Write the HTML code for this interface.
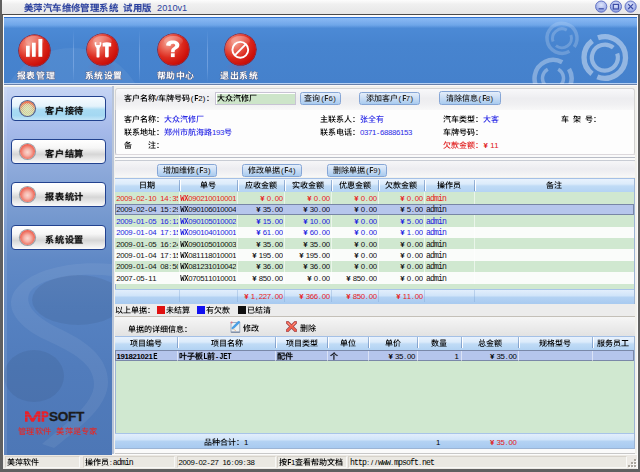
<!DOCTYPE html>
<html><head><meta charset="utf-8"><title>美萍汽车维修管理系统</title>
<style>
*{margin:0;padding:0;box-sizing:border-box}
html,body{width:640px;height:472px;overflow:hidden;background:#606060;font-family:"Liberation Sans",sans-serif}
.a{position:absolute}
.t{position:absolute;font-size:8px;line-height:10px;white-space:nowrap;color:#000}
.m{font-family:"Liberation Sans",sans-serif;font-size:7.8px;letter-spacing:0}
.m i{font-style:normal;display:inline-block;width:4px;text-align:center}
.m i.wd{transform:scaleX(.72)}
.m i.lt{font-family:"Liberation Mono",monospace;font-size:8.2px}
.m i.up{font-weight:bold;font-size:8.4px;transform:scaleX(.85)}
.m i.yn{width:7px;font-weight:bold;text-align:left;padding-left:0.4px}
svg.g{width:1em;height:1em;vertical-align:-0.12em;fill:currentColor;overflow:visible}
.b svg.g path{stroke:currentColor;stroke-width:0.5}
/* toolbar icons */
.ico{position:absolute;width:31px;height:31px;border-radius:50%;
 background:radial-gradient(circle at 32% 30%,#f4a292 0,#ea6454 24%,#dc2a1e 48%,#cc100a 72%,#a40202 100%);
 box-shadow:0 0 0 0.6px #a40000}
.ico:after{content:"";position:absolute;left:6px;top:1.5px;width:19px;height:10px;border-radius:50%;background:linear-gradient(rgba(255,255,255,.3),rgba(255,255,255,0))}
.refl{position:absolute;width:30px;height:10px;border-radius:50%;background:radial-gradient(ellipse at 50% 35%,rgba(130,90,150,.38),rgba(110,110,170,.16) 50%,rgba(100,120,190,0) 72%)}
.lbl{position:absolute;font-size:8.9px;line-height:10px;font-weight:bold;color:#fff;white-space:nowrap;letter-spacing:0.7px;margin-left:-1px}
.lbl svg.g{filter:drop-shadow(0 0 0.6px rgba(10,25,80,1)) drop-shadow(0.4px 0.5px 0.2px rgba(10,25,80,.8))}
.lbl svg.g path{stroke:#fff;stroke-width:1.7}
.sep{position:absolute;top:30px;width:1px;height:52px;background:linear-gradient(rgba(140,180,230,0),rgba(140,180,235,.55) 40%,rgba(140,180,235,.55) 70%,rgba(140,180,230,0))}
/* nav buttons */
.nb{position:absolute;left:11px;width:95px;height:25px;border:1.7px solid #22428f;border-radius:4px;
 background:linear-gradient(#ffffff,#f6f6f6 35%,#d6d6d6 62%,#ececec 85%,#fafafa)}
.nb.on{background:linear-gradient(#f6fbff,#e4f2fb 40%,#a9dbf3 55%,#a4d8f2 80%,#c4e6f8)}
.nb .bl{position:absolute;left:8.2px;top:3.8px;width:15px;height:15px;border-radius:50%;
 background:radial-gradient(circle at 50% 55%,#fad8d0 0,#f6b4aa 30%,#f07868 58%,#ec4a3c 78%,#e84438 100%);box-shadow:0 0 0 1.1px #98a0a8}
.nb .tx{position:absolute;left:33px;top:8.8px;letter-spacing:0.7px;font-size:9.1px;line-height:10px;font-weight:bold;color:#111;white-space:nowrap}
.nb .tx svg.g path{stroke:#111;stroke-width:1.3}
/* buttons */
.btn{position:absolute;height:13.5px;border:1px solid #86a6d6;border-radius:2.5px;background:linear-gradient(#e4eefa,#c8dcf4 50%,#a8cbef);}
.btn .tx{position:absolute;left:0;right:0;top:1.5px;text-align:center;font-size:8px;line-height:10px;white-space:nowrap;color:#222}
/* grid */
.hdr{position:absolute;background:linear-gradient(#a4c0e6 0,#a4c0e6 1px,#e8f2fd 1px,#dcebfb 6px,#c0dbf6 8px,#b2d2f3 100%)}
.hs{position:absolute;top:2px;width:1px;height:11px;background:linear-gradient(#9cb8dc,#7c9cc8);box-shadow:1px 0 0 #fff}
.row{position:absolute;height:11.4px}
.c{position:absolute;top:1.4px;font-size:8px;line-height:9px;white-space:nowrap}
.r{text-align:right}
.sb svg.g path{stroke:currentColor;stroke-width:1.4}
.sb .m i{font-weight:bold}
</style></head><body>

<!-- ===== title bar ===== -->
<div class="a" style="left:2px;top:0;width:638px;height:14px;background:linear-gradient(#fdfdfd,#f0f0f0 30%,#e6e6e6)"></div>
<div class="a" style="left:2px;top:14px;width:636px;height:1px;background:#4a4a4a"></div>
<div class="t b" style="left:24px;top:3px;font-size:9.4px;line-height:10px;font-weight:bold;color:#2c42a0">美萍汽车维修管理系统<span style="display:inline-block;width:5.5px"></span>试用版<span style="display:inline-block;width:5.5px"></span><span style="font-size:9.2px;font-weight:normal">2010v1</span></div>
<svg class="a" style="left:592px;top:0" width="48" height="14" viewBox="0 0 48 14">
 <defs><radialGradient id="wb" cx="50%" cy="35%" r="60%"><stop offset="0" stop-color="#dfe6fb"/><stop offset="0.6" stop-color="#b4c0ee"/><stop offset="1" stop-color="#8a9ce0"/></radialGradient></defs>
 <g stroke="#6272c4" stroke-width="1" fill="url(#wb)"><circle cx="9.2" cy="6.6" r="5.6"/><circle cx="23.9" cy="6.6" r="5.6"/><circle cx="38.6" cy="6.6" r="5.6"/></g>
 <g stroke="#3b4ca6" stroke-width="1.2" fill="none"><path d="M6.6 8.8h5.2"/><rect x="21.3" y="4.4" width="5.2" height="4.6"/><path d="M36.2 4.2l4.8 4.8M41 4.2l-4.8 4.8"/></g>
</svg>

<!-- ===== inner frame ===== -->
<div class="a" style="left:3px;top:15px;width:635px;height:453.6px;background:#fbfbfb"></div>

<!-- ===== toolbar ===== -->
<div class="a" style="left:4px;top:16.5px;width:633px;height:68.5px;overflow:hidden;background:linear-gradient(#2f72d0 0,#2f72d0 1px,#7eb0f0 1px,#70a6ea 5px,#66a0e6 8px,#4c8ad6 10.5px,#4784cf 40%,#4581cc 96%,#4581cc 66.5px,#b6d0f2 66.5px,#b6d0f2 67.5px,#6a82aa 67.5px)">
 <svg class="a" style="left:0;top:-0.5px" width="633" height="68" viewBox="4 16 633 68">
  <circle cx="72" cy="122" r="74" fill="#fff" opacity="0.06"/>
  <g fill="none" stroke="#fff"><path d="M592.3 40.9A20.8 20.8 0 0 0 592.0 73.9M597.3 76.9A20.8 20.8 0 1 0 598.0 37.8" stroke-width="5.3" opacity="0.42"/><path d="M613.3 47.7A13 13 0 1 0 617.2 53.5" stroke-width="4.2" opacity="0.42"/><path d="M574.3 46.9A15 15 0 1 0 569.5 51.3" stroke-width="3.5" opacity="0.2"/><path d="M566.8 30.1A9.5 9.5 0 0 0 553.1 41.5M555.9 45.6A9.5 9.5 0 0 0 570.9 35.1" stroke-width="3" opacity="0.2"/><path d="M562.2 62.3A18.5 18.5 0 1 0 569.0 69.0" stroke-width="4.5" opacity="0.33"/><path d="M547.8 69.2A10.5 10.5 0 1 0 558.2 69.2" stroke-width="3.5" opacity="0.33"/></g>
 </svg>
 <div class="a" style="left:0;top:1px;width:633px;height:10px;background:linear-gradient(rgba(150,195,245,.45),rgba(120,170,235,.15))"></div>
</div>
<div class="sep" style="left:72.5px"></div>
<div class="sep" style="left:139px"></div>
<div class="sep" style="left:206.5px"></div>

<div class="refl" style="left:20px;top:63px"></div>
<div class="refl" style="left:87px;top:63px"></div>
<div class="refl" style="left:158.5px;top:63px"></div>
<div class="refl" style="left:225.3px;top:63px"></div>
<div class="ico" style="left:19.4px;top:34.5px"></div>
<div class="ico" style="left:86.7px;top:34.2px"></div>
<div class="ico" style="left:158px;top:34.2px"></div>
<div class="ico" style="left:224.8px;top:34.3px"></div>
<svg class="a" style="left:0;top:16px" width="280" height="68" viewBox="0 16 280 68">
 <g fill="#fff">
  <rect x="26" y="45.7" width="3.7" height="11.1"/><rect x="32" y="42.7" width="3.7" height="14.1"/><rect x="38.4" y="39" width="3.9" height="17.8"/>
  <path d="M94.6 42.6C94.6 45.6 95.6 47.2 96.5 47.9V56.4C96.5 57.2 97.1 57.6 98 57.6C98.9 57.6 99.5 57.2 99.5 56.4V47.9C100.4 47.2 101.4 45.6 101.4 42.6L99.7 42.1V44.9H96.3V42.1Z"/>
  <path d="M102.6 43Q106.9 41.7 111.2 43V46.4H108.7V56.5Q108.7 57.6 106.9 57.6Q105.1 57.6 105.1 56.5V46.4H102.6Z"/>
  <path d="M166.2 45.4c0-3.4 2.6-5 6.6-5 4 0 6.6 1.8 6.6 4.6 0 2.4-1.6 3.4-3.2 4.3-1.2.7-1.5 1.2-1.5 2.3v.6h-3.6v-1c0-1.8.6-2.8 2.2-3.8 1.3-.8 1.9-1.2 1.9-2.1 0-.9-.8-1.6-2.2-1.6-1.5 0-2.4.8-2.5 2.3z"/>
  <rect x="170.9" y="53.3" width="3.8" height="3.8"/>
 </g>
 <g fill="none" stroke="#fff" stroke-width="1.9"><circle cx="240.3" cy="49.8" r="7.9"/><path d="M245.6 44.4l-10.6 10.8"/></g>
</svg>
<div class="lbl" style="left:17.8px;top:71px">报表管理</div>
<div class="lbl" style="left:85.6px;top:71px">系统设置</div>
<div class="lbl" style="left:157.5px;top:71px">帮助中心</div>
<div class="lbl" style="left:221px;top:71px">退出系统</div>

<!-- ===== left panel ===== -->
<div class="a" style="left:4px;top:86px;width:108px;height:369px;overflow:hidden;background:linear-gradient(#ecefe8 0,#ecefe8 1px,#c6d5f4 1px,#c0d0f2 10px,#a6baea 44px,#8ba8d9 87px,#7699cf 130px,#6089c6 173px,#5682c2 220px,#517cbc 280px,#4d77b6 369px)">
 <svg class="a" style="left:0;top:0" width="108" height="369" viewBox="4 86 108 369">
  <g fill="#000" opacity="0.06">
   <ellipse cx="78" cy="300" rx="46" ry="25"/>
   <ellipse cx="34" cy="376" rx="30" ry="26"/>
  </g>
  <g fill="#ffffff" opacity="0.065">
   <path d="M112 264 C70 260 28 270 14 292 C4 310 20 328 46 340 C74 353 94 364 94 384 C94 404 68 422 42 444 L54 448 C82 426 108 406 108 382 C108 356 84 340 58 328 C34 316 24 304 30 292 C40 278 78 272 112 276 Z"/>
  </g>
  <rect x="4" y="86" width="3" height="369" fill="#fff" opacity="0.10"/>
 </svg>
</div>
<div class="a" style="left:112px;top:86px;width:1.5px;height:368px;background:#b8c4d8"></div>

<div class="nb on" style="top:96.2px"><div class="bl" style="background:radial-gradient(circle at 50% 55%,rgba(214,240,196,.85) 0,rgba(214,240,196,.55) 40%,rgba(214,240,196,0) 62%),repeating-conic-gradient(#f07452 0 25%,#d0eebc 0 50%) 0 0/2px 2px,#e89070;box-shadow:0 0 0 1.1px #56648e,inset 0 -2px 2px rgba(210,240,190,.8),inset 0 2px 1px rgba(240,110,80,.9)"></div><div class="tx">客户接待</div></div>
<div class="nb" style="top:139.4px"><div class="bl"></div><div class="tx">客户结算</div></div>
<div class="nb" style="top:181.8px"><div class="bl"></div><div class="tx">报表统计</div></div>
<div class="nb" style="top:225px"><div class="bl"></div><div class="tx">系统设置</div></div>

<!-- logo -->
<svg class="a" style="left:20px;top:408px" width="30" height="16" viewBox="20 408 30 16">
 <path fill="#e8202a" d="M25 421.8V411.3H28.2L32.6 418.2L37 411.3H40.4V421.8H37.8V415.6L33.8 421.8H31.4L27.6 415.6V421.8Z M41.6 421.8V411.3H45.6C49.6 411.3 49.6 417.6 45.6 417.6H44.2V421.8Z M44.2 413.3V415.6H45.4C46.9 415.6 46.9 413.3 45.4 413.3Z" fill-rule="evenodd"/>
 <g fill="#4d78bf" opacity="0.55"><rect x="24" y="414.2" width="26" height="0.6"/><rect x="24" y="417.4" width="26" height="0.6"/></g>
</svg>
<div class="a" style="left:49px;top:410.3px;font-size:13.6px;line-height:14px;font-weight:bold;white-space:nowrap;letter-spacing:-0.3px;color:#1c1c1c;-webkit-text-stroke:0.3px #1c1c1c">SOFT</div>
<div class="t" style="left:18.3px;top:426.5px;font-size:8.2px;color:#e02a2a">管理软件<span style="display:inline-block;width:5.4px"></span>美萍是专家</div>
<!-- ===== content ===== -->
<div class="a" style="left:113.5px;top:86px;width:523.5px;height:368px;background:#f2f1ec"></div>
<!-- search panel -->
<div class="a" style="left:114.5px;top:87.5px;width:520px;height:22px;border-radius:3px 3px 0 0;border:1px solid #d4d4d4;border-bottom:none;background:linear-gradient(#f8f8fa,#ededf0 45%,#f0f0f2 72%,#f8f8f8)"></div>
<div class="t" style="left:123.9px;top:93.7px">客户名称/车牌号码<span class="m">(F2)</span>：</div>
<div class="a" style="left:215.2px;top:91.5px;width:80.4px;height:13px;border:1px solid #c8c4d4;background:#cde5c9;box-shadow:inset 1px 1px 0 #fff"></div>
<div class="t" style="left:216.8px;top:93.5px">大众汽修厂</div>
<div class="btn" style="left:300.3px;top:91.7px;width:40.3px"><div class="tx">查询<span class="m">(F6)</span></div></div>
<div class="btn" style="left:359.4px;top:91.6px;width:60.6px"><div class="tx">添加客户<span class="m">(F7)</span></div></div>
<div class="btn" style="left:439px;top:91.2px;width:61.6px"><div class="tx">清除信息<span class="m">(F8)</span></div></div>

<!-- info panel -->
<div class="a" style="left:114.5px;top:109.5px;width:520px;height:45px;border-left:1px solid #b8bcc8;border-right:1px solid #d0d0d0;border-radius:0 0 3px 3px;background:#fdfdfd"></div>
<div class="t" style="left:124.1px;top:115px">客户名称：<span style="color:#2a2ae6">大众汽修厂</span></div>
<div class="t" style="left:124.1px;top:128px">联系地址：<span style="color:#2a2ae6">郑州市航海路<span class="m">193</span>号</span></div>
<div class="t" style="left:124.1px;top:140.6px">备<span style="display:inline-block;width:16px"></span>注：</div>
<div class="t" style="left:320px;top:115px">主联系人：<span style="color:#2a2ae6">张全有</span></div>
<div class="t" style="left:320px;top:128px">联系电话：<span class="m" style="color:#2a2ae6">0371-68886153</span></div>
<div class="t" style="left:443.2px;top:115px">汽车类型：<span style="color:#2a2ae6">大客</span></div>
<div class="t" style="left:443.2px;top:128px">车牌号码：</div>
<div class="t" style="left:443.2px;top:140.6px;color:#e01818">欠款金额：<span class="m">￥11</span></div>
<div class="t" style="left:561px;top:115px">车<span style="display:inline-block;width:4px"></span>架<span style="display:inline-block;width:4px"></span>号：</div>

<!-- separator -->
<div class="a" style="left:114.5px;top:154px;width:520px;height:1px;background:#dcd8dc"></div>
<div class="a" style="left:114.5px;top:155px;width:520px;height:2px;background:#fafafa"></div>
<div class="a" style="left:114.5px;top:157px;width:520px;height:1px;background:#b8bcc6"></div>
<div class="a" style="left:114.5px;top:158px;width:520px;height:1.8px;background:#fbfbfb"></div>
<div class="a" style="left:114.5px;top:159.8px;width:520px;height:1px;background:#c8ccd4"></div>
<!-- button bar -->
<div class="a" style="left:114.5px;top:160.8px;width:520px;height:16.7px;border-radius:3px 3px 0 0;background:linear-gradient(#f6f6f8,#ececf0 50%,#f2f2f4 80%,#f8f8f8)"></div>
<div class="btn" style="left:157px;top:163.5px;width:60.4px"><div class="tx">增加维修<span class="m">(F3)</span></div></div>
<div class="btn" style="left:242px;top:163.5px;width:60.4px"><div class="tx">修改单据<span class="m">(F4)</span></div></div>
<div class="btn" style="left:327px;top:163.5px;width:60.4px"><div class="tx">删除单据<span class="m">(F9)</span></div></div>

<!-- ===== main grid ===== -->
<div class="a" style="left:114.5px;top:177.5px;width:520px;height:126px;border:1px solid #9cb4d4;border-top:none;background:#d0e8d0"></div>
<div class="hdr" style="left:115px;top:177.5px;width:519px;height:15px"></div>
<div class="t " style="left:116.5px;top:181.3px;width:61.0px;overflow:hidden;text-align:center;">日期</div>
<div class="t " style="left:180.5px;top:181.3px;width:55.0px;overflow:hidden;text-align:center;">单号</div>
<div class="hs" style="left:178.5px;top:179.5px"></div>
<div class="t " style="left:238.5px;top:181.3px;width:44.0px;overflow:hidden;text-align:center;">应收金额</div>
<div class="hs" style="left:236.5px;top:179.5px"></div>
<div class="t " style="left:285.5px;top:181.3px;width:44.0px;overflow:hidden;text-align:center;">实收金额</div>
<div class="hs" style="left:283.5px;top:179.5px"></div>
<div class="t " style="left:332.5px;top:181.3px;width:44.0px;overflow:hidden;text-align:center;">优惠金额</div>
<div class="hs" style="left:330.5px;top:179.5px"></div>
<div class="t " style="left:379.5px;top:181.3px;width:43.0px;overflow:hidden;text-align:center;">欠款金额</div>
<div class="hs" style="left:377.5px;top:179.5px"></div>
<div class="t " style="left:425.5px;top:181.3px;width:47.3px;overflow:hidden;text-align:center;">操作员</div>
<div class="hs" style="left:423.5px;top:179.5px"></div>
<div class="t " style="left:475.8px;top:181.3px;width:156.7px;overflow:hidden;text-align:center;">备注</div>
<div class="hs" style="left:473.8px;top:179.5px"></div>
<div class="row" style="left:115px;top:192.4px;width:519px;background:#d0e8d0"></div>
<div class="a" style="left:178.5px;top:192.4px;width:1px;height:11.4px;background:rgba(255,255,255,.55)"></div>
<div class="a" style="left:236.5px;top:192.4px;width:1px;height:11.4px;background:rgba(255,255,255,.55)"></div>
<div class="a" style="left:283.5px;top:192.4px;width:1px;height:11.4px;background:rgba(255,255,255,.55)"></div>
<div class="a" style="left:330.5px;top:192.4px;width:1px;height:11.4px;background:rgba(255,255,255,.55)"></div>
<div class="a" style="left:377.5px;top:192.4px;width:1px;height:11.4px;background:rgba(255,255,255,.55)"></div>
<div class="a" style="left:423.5px;top:192.4px;width:1px;height:11.4px;background:rgba(255,255,255,.55)"></div>
<div class="a" style="left:473.8px;top:192.4px;width:1px;height:11.4px;background:rgba(255,255,255,.55)"></div>
<div class="t " style="left:116.3px;top:194.0px;width:61.4px;overflow:hidden;color:#e81c1c;"><span class="m">2009-02-10 14:35:21</span></div>
<div class="t " style="left:180.3px;top:194.0px;width:55.4px;overflow:hidden;color:#e81c1c;"><span class="m">WX090210010001</span></div>
<div class="t " style="left:238.2px;top:194.0px;width:44.6px;overflow:hidden;text-align:right;color:#e81c1c;"><span class="m">￥0.00</span></div>
<div class="t " style="left:285.2px;top:194.0px;width:44.6px;overflow:hidden;text-align:right;color:#e81c1c;"><span class="m">￥0.00</span></div>
<div class="t " style="left:332.2px;top:194.0px;width:44.6px;overflow:hidden;text-align:right;color:#e81c1c;"><span class="m">￥0.00</span></div>
<div class="t " style="left:379.2px;top:194.0px;width:43.6px;overflow:hidden;text-align:right;color:#e81c1c;"><span class="m">￥0.00</span></div>
<div class="t " style="left:426.0px;top:194.0px;width:46.3px;overflow:hidden;color:#e81c1c;"><span class="m">admin</span></div>
<div class="row" style="left:115px;top:203.8px;width:519px;background:#b6c6ec;border:1px solid #7886a6"></div>
<div class="t " style="left:116.3px;top:205.4px;width:61.4px;overflow:hidden;color:#101020;"><span class="m">2009-02-04 15:29:10</span></div>
<div class="t " style="left:180.3px;top:205.4px;width:55.4px;overflow:hidden;color:#101020;"><span class="m">WX090106010004</span></div>
<div class="t " style="left:238.2px;top:205.4px;width:44.6px;overflow:hidden;text-align:right;color:#101020;"><span class="m">￥35.00</span></div>
<div class="t " style="left:285.2px;top:205.4px;width:44.6px;overflow:hidden;text-align:right;color:#101020;"><span class="m">￥30.00</span></div>
<div class="t " style="left:332.2px;top:205.4px;width:44.6px;overflow:hidden;text-align:right;color:#101020;"><span class="m">￥0.00</span></div>
<div class="t " style="left:379.2px;top:205.4px;width:43.6px;overflow:hidden;text-align:right;color:#101020;"><span class="m">￥5.00</span></div>
<div class="t " style="left:426.0px;top:205.4px;width:46.3px;overflow:hidden;color:#101020;"><span class="m">admin</span></div>
<div class="row" style="left:115px;top:215.2px;width:519px;background:#d0e8d0"></div>
<div class="a" style="left:178.5px;top:215.2px;width:1px;height:11.4px;background:rgba(255,255,255,.55)"></div>
<div class="a" style="left:236.5px;top:215.2px;width:1px;height:11.4px;background:rgba(255,255,255,.55)"></div>
<div class="a" style="left:283.5px;top:215.2px;width:1px;height:11.4px;background:rgba(255,255,255,.55)"></div>
<div class="a" style="left:330.5px;top:215.2px;width:1px;height:11.4px;background:rgba(255,255,255,.55)"></div>
<div class="a" style="left:377.5px;top:215.2px;width:1px;height:11.4px;background:rgba(255,255,255,.55)"></div>
<div class="a" style="left:423.5px;top:215.2px;width:1px;height:11.4px;background:rgba(255,255,255,.55)"></div>
<div class="a" style="left:473.8px;top:215.2px;width:1px;height:11.4px;background:rgba(255,255,255,.55)"></div>
<div class="t " style="left:116.3px;top:216.8px;width:61.4px;overflow:hidden;color:#1c1ce0;"><span class="m">2009-01-05 16:12:40</span></div>
<div class="t " style="left:180.3px;top:216.8px;width:55.4px;overflow:hidden;color:#1c1ce0;"><span class="m">WX090105010002</span></div>
<div class="t " style="left:238.2px;top:216.8px;width:44.6px;overflow:hidden;text-align:right;color:#1c1ce0;"><span class="m">￥15.00</span></div>
<div class="t " style="left:285.2px;top:216.8px;width:44.6px;overflow:hidden;text-align:right;color:#1c1ce0;"><span class="m">￥10.00</span></div>
<div class="t " style="left:332.2px;top:216.8px;width:44.6px;overflow:hidden;text-align:right;color:#1c1ce0;"><span class="m">￥0.00</span></div>
<div class="t " style="left:379.2px;top:216.8px;width:43.6px;overflow:hidden;text-align:right;color:#1c1ce0;"><span class="m">￥5.00</span></div>
<div class="t " style="left:426.0px;top:216.8px;width:46.3px;overflow:hidden;color:#1c1ce0;"><span class="m">admin</span></div>
<div class="row" style="left:115px;top:226.6px;width:519px;background:#fafcfa"></div>
<div class="a" style="left:178.5px;top:226.6px;width:1px;height:11.4px;background:rgba(255,255,255,.55)"></div>
<div class="a" style="left:236.5px;top:226.6px;width:1px;height:11.4px;background:rgba(255,255,255,.55)"></div>
<div class="a" style="left:283.5px;top:226.6px;width:1px;height:11.4px;background:rgba(255,255,255,.55)"></div>
<div class="a" style="left:330.5px;top:226.6px;width:1px;height:11.4px;background:rgba(255,255,255,.55)"></div>
<div class="a" style="left:377.5px;top:226.6px;width:1px;height:11.4px;background:rgba(255,255,255,.55)"></div>
<div class="a" style="left:423.5px;top:226.6px;width:1px;height:11.4px;background:rgba(255,255,255,.55)"></div>
<div class="a" style="left:473.8px;top:226.6px;width:1px;height:11.4px;background:rgba(255,255,255,.55)"></div>
<div class="t " style="left:116.3px;top:228.2px;width:61.4px;overflow:hidden;color:#1c1ce0;"><span class="m">2009-01-04 17:15:02</span></div>
<div class="t " style="left:180.3px;top:228.2px;width:55.4px;overflow:hidden;color:#1c1ce0;"><span class="m">WX090104010001</span></div>
<div class="t " style="left:238.2px;top:228.2px;width:44.6px;overflow:hidden;text-align:right;color:#1c1ce0;"><span class="m">￥61.00</span></div>
<div class="t " style="left:285.2px;top:228.2px;width:44.6px;overflow:hidden;text-align:right;color:#1c1ce0;"><span class="m">￥60.00</span></div>
<div class="t " style="left:332.2px;top:228.2px;width:44.6px;overflow:hidden;text-align:right;color:#1c1ce0;"><span class="m">￥0.00</span></div>
<div class="t " style="left:379.2px;top:228.2px;width:43.6px;overflow:hidden;text-align:right;color:#1c1ce0;"><span class="m">￥1.00</span></div>
<div class="t " style="left:426.0px;top:228.2px;width:46.3px;overflow:hidden;color:#1c1ce0;"><span class="m">admin</span></div>
<div class="row" style="left:115px;top:238.0px;width:519px;background:#d0e8d0"></div>
<div class="a" style="left:178.5px;top:238.0px;width:1px;height:11.4px;background:rgba(255,255,255,.55)"></div>
<div class="a" style="left:236.5px;top:238.0px;width:1px;height:11.4px;background:rgba(255,255,255,.55)"></div>
<div class="a" style="left:283.5px;top:238.0px;width:1px;height:11.4px;background:rgba(255,255,255,.55)"></div>
<div class="a" style="left:330.5px;top:238.0px;width:1px;height:11.4px;background:rgba(255,255,255,.55)"></div>
<div class="a" style="left:377.5px;top:238.0px;width:1px;height:11.4px;background:rgba(255,255,255,.55)"></div>
<div class="a" style="left:423.5px;top:238.0px;width:1px;height:11.4px;background:rgba(255,255,255,.55)"></div>
<div class="a" style="left:473.8px;top:238.0px;width:1px;height:11.4px;background:rgba(255,255,255,.55)"></div>
<div class="t " style="left:116.3px;top:239.6px;width:61.4px;overflow:hidden;color:#101010;"><span class="m">2009-01-05 16:24:33</span></div>
<div class="t " style="left:180.3px;top:239.6px;width:55.4px;overflow:hidden;color:#101010;"><span class="m">WX090105010003</span></div>
<div class="t " style="left:238.2px;top:239.6px;width:44.6px;overflow:hidden;text-align:right;color:#101010;"><span class="m">￥35.00</span></div>
<div class="t " style="left:285.2px;top:239.6px;width:44.6px;overflow:hidden;text-align:right;color:#101010;"><span class="m">￥35.00</span></div>
<div class="t " style="left:332.2px;top:239.6px;width:44.6px;overflow:hidden;text-align:right;color:#101010;"><span class="m">￥0.00</span></div>
<div class="t " style="left:379.2px;top:239.6px;width:43.6px;overflow:hidden;text-align:right;color:#101010;"><span class="m">￥0.00</span></div>
<div class="t " style="left:426.0px;top:239.6px;width:46.3px;overflow:hidden;color:#101010;"><span class="m">admin</span></div>
<div class="row" style="left:115px;top:249.4px;width:519px;background:#fafcfa"></div>
<div class="a" style="left:178.5px;top:249.4px;width:1px;height:11.4px;background:rgba(255,255,255,.55)"></div>
<div class="a" style="left:236.5px;top:249.4px;width:1px;height:11.4px;background:rgba(255,255,255,.55)"></div>
<div class="a" style="left:283.5px;top:249.4px;width:1px;height:11.4px;background:rgba(255,255,255,.55)"></div>
<div class="a" style="left:330.5px;top:249.4px;width:1px;height:11.4px;background:rgba(255,255,255,.55)"></div>
<div class="a" style="left:377.5px;top:249.4px;width:1px;height:11.4px;background:rgba(255,255,255,.55)"></div>
<div class="a" style="left:423.5px;top:249.4px;width:1px;height:11.4px;background:rgba(255,255,255,.55)"></div>
<div class="a" style="left:473.8px;top:249.4px;width:1px;height:11.4px;background:rgba(255,255,255,.55)"></div>
<div class="t " style="left:116.3px;top:251.0px;width:61.4px;overflow:hidden;color:#101010;"><span class="m">2009-01-04 17:15:50</span></div>
<div class="t " style="left:180.3px;top:251.0px;width:55.4px;overflow:hidden;color:#101010;"><span class="m">WX081118010001</span></div>
<div class="t " style="left:238.2px;top:251.0px;width:44.6px;overflow:hidden;text-align:right;color:#101010;"><span class="m">￥195.00</span></div>
<div class="t " style="left:285.2px;top:251.0px;width:44.6px;overflow:hidden;text-align:right;color:#101010;"><span class="m">￥195.00</span></div>
<div class="t " style="left:332.2px;top:251.0px;width:44.6px;overflow:hidden;text-align:right;color:#101010;"><span class="m">￥0.00</span></div>
<div class="t " style="left:379.2px;top:251.0px;width:43.6px;overflow:hidden;text-align:right;color:#101010;"><span class="m">￥0.00</span></div>
<div class="t " style="left:426.0px;top:251.0px;width:46.3px;overflow:hidden;color:#101010;"><span class="m">admin</span></div>
<div class="row" style="left:115px;top:260.8px;width:519px;background:#d0e8d0"></div>
<div class="a" style="left:178.5px;top:260.8px;width:1px;height:11.4px;background:rgba(255,255,255,.55)"></div>
<div class="a" style="left:236.5px;top:260.8px;width:1px;height:11.4px;background:rgba(255,255,255,.55)"></div>
<div class="a" style="left:283.5px;top:260.8px;width:1px;height:11.4px;background:rgba(255,255,255,.55)"></div>
<div class="a" style="left:330.5px;top:260.8px;width:1px;height:11.4px;background:rgba(255,255,255,.55)"></div>
<div class="a" style="left:377.5px;top:260.8px;width:1px;height:11.4px;background:rgba(255,255,255,.55)"></div>
<div class="a" style="left:423.5px;top:260.8px;width:1px;height:11.4px;background:rgba(255,255,255,.55)"></div>
<div class="a" style="left:473.8px;top:260.8px;width:1px;height:11.4px;background:rgba(255,255,255,.55)"></div>
<div class="t " style="left:116.3px;top:262.4px;width:61.4px;overflow:hidden;color:#101010;"><span class="m">2009-01-04 08:50:11</span></div>
<div class="t " style="left:180.3px;top:262.4px;width:55.4px;overflow:hidden;color:#101010;"><span class="m">WX081231010042</span></div>
<div class="t " style="left:238.2px;top:262.4px;width:44.6px;overflow:hidden;text-align:right;color:#101010;"><span class="m">￥36.00</span></div>
<div class="t " style="left:285.2px;top:262.4px;width:44.6px;overflow:hidden;text-align:right;color:#101010;"><span class="m">￥36.00</span></div>
<div class="t " style="left:332.2px;top:262.4px;width:44.6px;overflow:hidden;text-align:right;color:#101010;"><span class="m">￥0.00</span></div>
<div class="t " style="left:379.2px;top:262.4px;width:43.6px;overflow:hidden;text-align:right;color:#101010;"><span class="m">￥0.00</span></div>
<div class="t " style="left:426.0px;top:262.4px;width:46.3px;overflow:hidden;color:#101010;"><span class="m">admin</span></div>
<div class="row" style="left:115px;top:272.2px;width:519px;background:#fafcfa"></div>
<div class="a" style="left:178.5px;top:272.2px;width:1px;height:11.4px;background:rgba(255,255,255,.55)"></div>
<div class="a" style="left:236.5px;top:272.2px;width:1px;height:11.4px;background:rgba(255,255,255,.55)"></div>
<div class="a" style="left:283.5px;top:272.2px;width:1px;height:11.4px;background:rgba(255,255,255,.55)"></div>
<div class="a" style="left:330.5px;top:272.2px;width:1px;height:11.4px;background:rgba(255,255,255,.55)"></div>
<div class="a" style="left:377.5px;top:272.2px;width:1px;height:11.4px;background:rgba(255,255,255,.55)"></div>
<div class="a" style="left:423.5px;top:272.2px;width:1px;height:11.4px;background:rgba(255,255,255,.55)"></div>
<div class="a" style="left:473.8px;top:272.2px;width:1px;height:11.4px;background:rgba(255,255,255,.55)"></div>
<div class="t " style="left:116.3px;top:273.8px;width:61.4px;overflow:hidden;color:#101010;"><span class="m">2007-05-11</span></div>
<div class="t " style="left:180.3px;top:273.8px;width:55.4px;overflow:hidden;color:#101010;"><span class="m">WX070511010001</span></div>
<div class="t " style="left:238.2px;top:273.8px;width:44.6px;overflow:hidden;text-align:right;color:#101010;"><span class="m">￥850.00</span></div>
<div class="t " style="left:285.2px;top:273.8px;width:44.6px;overflow:hidden;text-align:right;color:#101010;"><span class="m">￥0.00</span></div>
<div class="t " style="left:332.2px;top:273.8px;width:44.6px;overflow:hidden;text-align:right;color:#101010;"><span class="m">￥850.00</span></div>
<div class="t " style="left:379.2px;top:273.8px;width:43.6px;overflow:hidden;text-align:right;color:#101010;"><span class="m">￥0.00</span></div>
<div class="t " style="left:426.0px;top:273.8px;width:46.3px;overflow:hidden;color:#101010;"><span class="m">admin</span></div>
<div class="a" style="left:115px;top:289px;width:519px;height:14.5px;background:linear-gradient(#a8c4e8 0,#a8c4e8 1px,#e2eefc 1px,#d0e4f9 45%,#b4d2f3 55%,#a8caf0 100%)"></div>
<div class="t " style="left:238.2px;top:292.4px;width:44.6px;overflow:hidden;text-align:right;color:#e81c1c;"><span class="m">￥1,227.00</span></div>
<div class="t " style="left:285.2px;top:292.4px;width:44.6px;overflow:hidden;text-align:right;color:#e81c1c;"><span class="m">￥366.00</span></div>
<div class="t " style="left:332.2px;top:292.4px;width:44.6px;overflow:hidden;text-align:right;color:#e81c1c;"><span class="m">￥850.00</span></div>
<div class="t " style="left:379.2px;top:292.4px;width:43.6px;overflow:hidden;text-align:right;color:#e81c1c;"><span class="m">￥11.00</span></div>
<div class="a" style="left:178.5px;top:290px;width:1px;height:12px;background:rgba(120,160,210,.35)"></div>
<div class="a" style="left:236.5px;top:290px;width:1px;height:12px;background:rgba(120,160,210,.35)"></div>
<div class="a" style="left:283.5px;top:290px;width:1px;height:12px;background:rgba(120,160,210,.35)"></div>
<div class="a" style="left:330.5px;top:290px;width:1px;height:12px;background:rgba(120,160,210,.35)"></div>
<div class="a" style="left:377.5px;top:290px;width:1px;height:12px;background:rgba(120,160,210,.35)"></div>
<div class="a" style="left:423.5px;top:290px;width:1px;height:12px;background:rgba(120,160,210,.35)"></div>
<div class="a" style="left:473.8px;top:290px;width:1px;height:12px;background:rgba(120,160,210,.35)"></div>

<!-- legend -->
<div class="a" style="left:114.5px;top:303.5px;width:520px;height:12.8px;background:#ececec"></div>
<div class="t" style="left:115px;top:305.5px">以上单据：</div>
<div class="a" style="left:157px;top:305.8px;width:8px;height:8.4px;background:#e01010"></div>
<div class="t" style="left:166.2px;top:305.5px">未结算</div>
<div class="a" style="left:197px;top:305.8px;width:8px;height:8.4px;background:#1010f0"></div>
<div class="t" style="left:206.2px;top:305.5px">有欠款</div>
<div class="a" style="left:237.6px;top:305.8px;width:8px;height:8.4px;background:#101010"></div>
<div class="t" style="left:246.6px;top:305.5px">已结清</div>
<div class="a" style="left:114.5px;top:316.3px;width:520px;height:1px;background:#c4c0b8"></div>
<!-- detail bar -->
<div class="a" style="left:114.5px;top:317.3px;width:520px;height:18.5px;background:linear-gradient(#f6f6f6,#eaeaea 60%,#e2e2e2)"></div>
<div class="t" style="left:127.6px;top:324.8px">单据的详细信息：</div>
<svg class="a" style="left:230px;top:321px" width="11" height="12" viewBox="0 0 11 12"><rect x="1" y="1.5" width="8.8" height="9.6" fill="#eef0f2" stroke="#8c9cb4" stroke-width="0.8"/><path d="M1.2 11.2h8.6" stroke="#6a7c98" stroke-width="1"/><path d="M8.8 1.2L2.8 7.2" stroke="#4c9ee4" stroke-width="2.4" stroke-linecap="round"/><circle cx="1.6" cy="1.6" r="1" fill="#e07080"/><path d="M3 7.8l3 2" stroke="#e8c8a0" stroke-width="1"/></svg>
<div class="t" style="left:242.6px;top:323.5px">修改</div>
<svg class="a" style="left:286px;top:321px" width="11" height="11" viewBox="0 0 11 11"><g stroke-linecap="round"><path d="M1.5 1.5L9.5 9.5M9.5 1.5L1.5 9.5" stroke="#8a4858" stroke-width="3.2"/><path d="M1.5 1.5L9.5 9.5M9.5 1.5L1.5 9.5" stroke="#f0604c" stroke-width="2.3"/><path d="M2 2L4 4M9 2L7 4" stroke="#ffb0a0" stroke-width="0.8"/></g></svg>
<div class="t" style="left:299.5px;top:323.5px">删除</div>

<!-- ===== detail grid ===== -->
<div class="a" style="left:114.5px;top:335.5px;width:520px;height:113px;border:1px solid #9cb4d4;border-top:none;background:#d0e8d0"></div>
<div class="hdr" style="left:115px;top:335.5px;width:519px;height:14.5px"></div>
<div class="t " style="left:116.5px;top:338.6px;width:59.5px;overflow:hidden;text-align:center;">项目编号</div>
<div class="t " style="left:179.0px;top:338.6px;width:95.1px;overflow:hidden;text-align:center;">项目名称</div>
<div class="hs" style="left:177.0px;top:337.4px"></div>
<div class="t " style="left:277.1px;top:338.6px;width:49.2px;overflow:hidden;text-align:center;">项目类型</div>
<div class="hs" style="left:275.1px;top:337.4px"></div>
<div class="t " style="left:329.3px;top:338.6px;width:37.6px;overflow:hidden;text-align:center;">单位</div>
<div class="hs" style="left:327.3px;top:337.4px"></div>
<div class="t " style="left:369.9px;top:338.6px;width:45.6px;overflow:hidden;text-align:center;">单价</div>
<div class="hs" style="left:367.9px;top:337.4px"></div>
<div class="t " style="left:418.5px;top:338.6px;width:41.3px;overflow:hidden;text-align:center;">数量</div>
<div class="hs" style="left:416.5px;top:337.4px"></div>
<div class="t " style="left:462.8px;top:338.6px;width:54.1px;overflow:hidden;text-align:center;">总金额</div>
<div class="hs" style="left:460.8px;top:337.4px"></div>
<div class="t " style="left:519.9px;top:338.6px;width:70.6px;overflow:hidden;text-align:center;">规格型号</div>
<div class="hs" style="left:517.9px;top:337.4px"></div>
<div class="t " style="left:593.5px;top:338.6px;width:39.0px;overflow:hidden;text-align:center;">服务员工</div>
<div class="hs" style="left:591.5px;top:337.4px"></div>
<div class="row" style="left:115px;top:350px;width:519px;height:11px;background:#b5c5ec;border:1px solid #7a88a8"></div>
<div class="a" style="left:177.0px;top:351px;width:1px;height:9.5px;background:rgba(255,255,255,.5)"></div>
<div class="a" style="left:275.1px;top:351px;width:1px;height:9.5px;background:rgba(255,255,255,.5)"></div>
<div class="a" style="left:327.3px;top:351px;width:1px;height:9.5px;background:rgba(255,255,255,.5)"></div>
<div class="a" style="left:367.9px;top:351px;width:1px;height:9.5px;background:rgba(255,255,255,.5)"></div>
<div class="a" style="left:416.5px;top:351px;width:1px;height:9.5px;background:rgba(255,255,255,.5)"></div>
<div class="a" style="left:460.8px;top:351px;width:1px;height:9.5px;background:rgba(255,255,255,.5)"></div>
<div class="a" style="left:517.9px;top:351px;width:1px;height:9.5px;background:rgba(255,255,255,.5)"></div>
<div class="a" style="left:591.5px;top:351px;width:1px;height:9.5px;background:rgba(255,255,255,.5)"></div>
<div class="a" style="left:177.0px;top:434.5px;width:1px;height:12.5px;background:rgba(120,160,210,.35)"></div>
<div class="a" style="left:275.1px;top:434.5px;width:1px;height:12.5px;background:rgba(120,160,210,.35)"></div>
<div class="a" style="left:327.3px;top:434.5px;width:1px;height:12.5px;background:rgba(120,160,210,.35)"></div>
<div class="a" style="left:367.9px;top:434.5px;width:1px;height:12.5px;background:rgba(120,160,210,.35)"></div>
<div class="a" style="left:416.5px;top:434.5px;width:1px;height:12.5px;background:rgba(120,160,210,.35)"></div>
<div class="a" style="left:460.8px;top:434.5px;width:1px;height:12.5px;background:rgba(120,160,210,.35)"></div>
<div class="a" style="left:517.9px;top:434.5px;width:1px;height:12.5px;background:rgba(120,160,210,.35)"></div>
<div class="a" style="left:591.5px;top:434.5px;width:1px;height:12.5px;background:rgba(120,160,210,.35)"></div>
<div class="t sb" style="left:116.5px;top:351.5px"><span class="m">191821021E</span></div>
<div class="t sb" style="left:179px;top:351.5px">叶子板<span class="m">L</span>前<span class="m">-JET</span></div>
<div class="t sb" style="left:277px;top:351.5px">配件</div>
<div class="t sb" style="left:329.5px;top:351.5px">个</div>
<div class="t" style="left:368px;top:351.5px;width:47px;text-align:right"><span class="m">￥35.00</span></div>
<div class="t" style="left:417px;top:351.5px;width:41.5px;text-align:right"><span class="m">1</span></div>
<div class="t" style="left:461px;top:351.5px;width:55.5px;text-align:right"><span class="m">￥35.00</span></div>
<div class="a" style="left:115px;top:433.3px;width:519px;height:15px;background:linear-gradient(#a8c4e8 0,#a8c4e8 1px,#e2eefc 1px,#d0e4f9 45%,#b4d2f3 55%,#a8caf0 100%)"></div>
<div class="t" style="left:204px;top:437.5px">品种合计：<span class="m">1</span></div>
<div class="t" style="left:436px;top:437.5px"><span class="m">1</span></div>
<div class="t" style="left:461px;top:437.5px;width:55.5px;text-align:right;color:#e01818"><span class="m">￥35.00</span></div>
<div class="a" style="left:114.5px;top:448.5px;width:520px;height:4px;background:#fafafa"></div>
<div class="a" style="left:114.5px;top:452.5px;width:520px;height:1px;background:#c8c8c8"></div>

<!-- ===== status bar ===== -->
<div class="a" style="left:3px;top:455px;width:634px;height:13.6px;background:#ece9e4"></div>
<div class="a" style="left:4.7px;top:455.8px;width:75.8px;height:12.2px;border:1px solid;border-color:#d6d2ca #f8f8f6 #f8f8f6 #d6d2ca;background:#eae8e2"></div>
<div class="t" style="left:6.7px;top:458px">美萍软件</div>
<div class="a" style="left:82.8px;top:455.8px;width:92.2px;height:12.2px;border:1px solid;border-color:#d6d2ca #f8f8f6 #f8f8f6 #d6d2ca;background:#eae8e2"></div>
<div class="t" style="left:84.8px;top:458px">操作员<span class="m">:admin</span></div>
<div class="a" style="left:176.5px;top:455.8px;width:99.0px;height:12.2px;border:1px solid;border-color:#d6d2ca #f8f8f6 #f8f8f6 #d6d2ca;background:#eae8e2"></div>
<div class="t" style="left:178.5px;top:458px"><span class="m">2009-02-27 16:09:38</span></div>
<div class="a" style="left:277px;top:455.8px;width:69.5px;height:12.2px;border:1px solid;border-color:#d6d2ca #f8f8f6 #f8f8f6 #d6d2ca;background:#eae8e2"></div>
<div class="t" style="left:279.0px;top:458px">按<span class="m">F1</span>查看帮助文档</div>
<div class="a" style="left:348px;top:455.8px;width:279.0px;height:12.2px;border:1px solid;border-color:#d6d2ca #f8f8f6 #f8f8f6 #d6d2ca;background:#eae8e2"></div>
<div class="t" style="left:350.0px;top:458px"><span class="m">http://www.mpsoft.net</span></div>
<div class="a" style="left:634px;top:459px;width:1.6px;height:1.6px;background:#aaa69e;box-shadow:0.8px 0.8px 0 #fff"></div>
<div class="a" style="left:631px;top:462px;width:1.6px;height:1.6px;background:#aaa69e;box-shadow:0.8px 0.8px 0 #fff"></div>
<div class="a" style="left:634px;top:462px;width:1.6px;height:1.6px;background:#aaa69e;box-shadow:0.8px 0.8px 0 #fff"></div>
<div class="a" style="left:628px;top:465px;width:1.6px;height:1.6px;background:#aaa69e;box-shadow:0.8px 0.8px 0 #fff"></div>
<div class="a" style="left:631px;top:465px;width:1.6px;height:1.6px;background:#aaa69e;box-shadow:0.8px 0.8px 0 #fff"></div>
<div class="a" style="left:634px;top:465px;width:1.6px;height:1.6px;background:#aaa69e;box-shadow:0.8px 0.8px 0 #fff"></div>

<script>

var GM={"上":"M21 2L21 41L2 41L2 46L48 46L48 41L26 41L26 22L44 22L44 17L26 17L26 2Z","专":"M21 2L19 7L7 7L7 11L18 11L16 17L3 17L3 21L15 21C14 25 13 28 12 31L35 31C32 33 29 36 26 39C22 38 18 36 15 36L13 39C20 41 31 45 36 48L39 44C37 43 34 42 31 41C35 36 40 32 44 28L40 26L39 26L18 26L20 21L47 21L47 17L21 17L23 11L43 11L43 7L24 7L26 2Z","个":"M22 17L22 48L27 48L27 17ZM25 2C20 10 11 17 2 21C3 22 4 24 5 25C12 22 20 16 25 10C32 18 39 22 45 25C46 24 47 22 49 21C42 18 35 14 28 6L29 4Z","中":"M22 2L22 11L5 11L5 35L9 35L9 32L22 32L22 48L27 48L27 32L40 32L40 35L45 35L45 11L27 11L27 2ZM9 27L9 15L22 15L22 27ZM40 27L27 27L27 15L40 15Z","主":"M18 5C21 7 24 9 26 12L5 12L5 16L22 16L22 26L7 26L7 31L22 31L22 42L3 42L3 47L48 47L48 42L28 42L28 31L43 31L43 26L28 26L28 16L45 16L45 12L29 12L31 10C29 7 25 4 22 2Z","人":"M22 2C22 10 22 34 2 44C3 45 5 47 6 48C17 42 22 32 25 22C28 31 33 42 45 48C46 46 47 45 49 44C31 36 28 16 27 9C27 6 27 4 27 2Z","以":"M18 9C21 12 24 18 26 21L30 18C28 15 25 10 22 7ZM38 4C37 26 33 38 18 44C19 45 20 47 21 48C27 46 32 42 35 37C39 40 43 45 44 48L49 45C46 41 42 36 37 32C41 25 42 16 43 4ZM7 44C8 42 10 41 25 34C24 33 24 31 23 29L13 35L13 5L8 5L8 35C8 37 6 39 4 40C5 41 6 42 7 44Z","件":"M16 26L16 31L30 31L30 48L35 48L35 31L48 31L48 26L35 26L35 16L46 16L46 12L35 12L35 2L30 2L30 12L24 12C25 10 25 8 26 5L21 4C20 11 18 17 15 21C16 22 18 23 19 24C21 22 22 19 23 16L30 16L30 26ZM13 2C10 9 6 17 1 21C2 23 3 25 4 26C5 25 7 23 8 21L8 48L12 48L12 14C14 11 16 7 17 3Z","价":"M36 22L36 48L40 48L40 22ZM22 22L22 28C22 33 21 40 14 45C15 46 17 48 18 49C25 43 26 34 26 29L26 22ZM29 2C27 8 22 15 13 20C14 21 15 23 16 24C23 20 28 15 31 9C35 15 40 20 45 23C46 22 48 20 49 20C43 17 37 11 33 5L34 2ZM13 2C10 9 6 17 2 21C2 22 4 25 4 26C5 25 7 23 8 22L8 48L13 48L13 14C14 10 16 7 17 3Z","众":"M24 1C20 10 12 16 2 19C4 21 5 22 6 24C8 23 11 22 13 20C12 31 9 40 2 45C3 46 6 47 6 48C11 44 14 39 15 33C18 35 21 38 22 40L26 36C24 34 20 31 17 28C17 26 18 23 18 20L13 20C18 17 22 14 25 9C30 16 37 21 45 23C46 22 47 20 48 19C40 17 32 12 28 6L29 3ZM31 20C30 32 27 40 20 45C21 46 23 47 24 48C28 45 31 40 33 34C35 39 39 45 44 48C45 46 46 44 48 43C41 40 37 33 35 27C35 25 36 23 36 21Z","优":"M32 22L32 41C32 45 33 47 37 47C38 47 42 47 42 47C46 47 48 45 48 37C47 36 45 36 44 35C44 41 43 43 42 43C41 43 38 43 38 43C36 43 36 42 36 41L36 22ZM35 5C37 8 40 11 41 13L45 10C44 8 41 5 38 3ZM26 2C26 6 26 10 25 14L15 14L15 18L25 18C24 29 22 39 13 44C15 45 16 47 17 48C26 41 29 30 30 18L48 18L48 14L30 14C30 10 30 6 30 2ZM13 2C10 9 6 17 2 21C2 22 4 25 4 26C5 25 7 23 8 22L8 48L12 48L12 14C14 11 16 7 17 3Z","位":"M18 11L18 15L46 15L46 11ZM21 19C23 25 24 34 25 40L29 38C29 33 27 24 26 18ZM28 2C29 5 30 8 30 10L35 9C35 7 34 4 33 1ZM16 42L16 46L48 46L48 42L38 42C40 35 42 26 43 18L38 17C38 25 36 35 34 42ZM14 2C11 9 6 17 2 21C3 23 4 25 4 26C6 25 7 23 8 21L8 48L13 48L13 14C15 10 17 7 18 3Z","作":"M26 2C24 10 20 17 15 22C16 22 18 24 19 25C21 22 24 18 26 15L28 15L28 48L33 48L33 36L48 36L48 32L33 32L33 25L47 25L47 21L33 21L33 15L48 15L48 10L28 10C29 8 30 6 31 4ZM14 2C11 9 6 17 2 21C2 23 4 25 4 26C6 25 7 23 8 21L8 48L13 48L13 14C15 11 17 7 18 3Z","信":"M19 17L19 21L44 21L44 17ZM19 24L19 28L44 28L44 24ZM18 32L18 48L22 48L22 46L40 46L40 48L44 48L44 32ZM22 43L22 36L40 36L40 43ZM27 3C28 5 30 8 30 10L16 10L16 14L48 14L48 10L31 10L35 8C34 6 32 4 31 2ZM12 2C10 9 6 17 1 21C2 22 4 25 4 26C5 24 7 22 8 20L8 48L13 48L13 13C14 10 15 6 17 3Z","修":"M35 25C32 27 27 29 23 31C24 31 25 32 25 33C30 32 35 29 38 26ZM40 30C36 33 30 36 23 37C24 38 25 39 26 40C32 38 39 35 43 31ZM44 35C39 40 30 43 21 44C22 45 23 47 23 48C34 46 43 43 48 37ZM15 16L15 40L19 40L19 24C20 25 21 26 21 27C26 26 30 24 34 22C38 24 42 25 46 26C47 25 48 24 49 23C45 22 41 21 38 19C42 16 45 13 47 8L44 7L43 7L30 7C31 6 32 4 32 3L28 2C26 7 23 12 19 15C20 16 21 17 22 18C24 17 25 15 26 14C27 16 29 18 31 19C27 21 23 22 19 23L19 16ZM28 11L41 11C39 13 37 15 34 17C32 15 30 13 28 11ZM11 2C9 10 5 17 1 22C2 23 3 26 3 27C5 25 6 24 7 22L7 48L12 48L12 13C13 10 15 7 16 3Z","全":"M24 1C19 9 10 16 1 20C2 21 4 23 4 24C6 23 8 22 10 21L10 24L22 24L22 31L10 31L10 35L22 35L22 43L4 43L4 47L46 47L46 43L28 43L28 35L40 35L40 31L28 31L28 24L40 24L40 21C42 22 44 23 46 24C46 23 48 21 49 20C41 16 34 11 28 5L29 3ZM11 20C16 17 21 13 25 8C29 13 34 17 39 20Z","出":"M5 27L5 45L40 45L40 48L45 48L45 27L40 27L40 41L28 41L28 24L43 24L43 6L38 6L38 19L28 19L28 2L22 2L22 19L12 19L12 6L7 6L7 24L22 24L22 41L10 41L10 27Z","删":"M35 7L35 36L39 36L39 7ZM42 3L42 43C42 44 42 44 41 44C41 44 38 44 36 44C37 45 37 47 37 48C41 48 43 48 44 47C46 47 46 46 46 43L46 3ZM2 21L2 25L5 25L5 28C5 34 5 41 2 46C3 46 4 48 5 48C8 43 9 35 9 28L9 25L13 25L13 43C13 43 12 44 12 44C12 44 10 44 8 44C9 45 9 46 9 48C12 48 14 48 15 47C16 46 17 45 17 43L17 25L20 25C20 32 19 40 17 46C18 47 19 48 20 48C23 42 23 33 23 25L27 25L27 43C27 43 27 44 26 44C26 44 24 44 23 44C23 45 24 46 24 48C27 48 28 48 30 47C31 46 31 45 31 43L31 25L33 25L33 21L31 21L31 3L20 3L20 21L17 21L17 3L5 3L5 21ZM9 8L13 8L13 21L9 21ZM23 8L27 8L27 21L23 21Z","前":"M30 18L30 39L34 39L34 18ZM40 17L40 43C40 43 40 44 39 44C38 44 35 44 32 44C33 45 34 47 34 48C38 48 40 48 42 47C44 46 44 45 44 43L44 17ZM36 2C34 4 33 7 31 10L16 10L19 9C18 7 16 4 14 2L10 3C11 5 13 8 14 10L2 10L2 14L48 14L48 10L36 10C38 8 39 5 41 3ZM20 30L20 34L10 34L10 30ZM20 26L10 26L10 22L20 22ZM5 18L5 48L10 48L10 37L20 37L20 43C20 44 20 44 19 44C18 44 16 44 14 44C15 45 15 47 15 48C19 48 21 48 22 47C24 47 24 45 24 43L24 18Z","加":"M28 8L28 47L33 47L33 44L41 44L41 47L46 47L46 8ZM33 39L33 12L41 12L41 39ZM9 2L9 11L3 11L3 16L9 16C9 28 7 38 1 45C2 46 4 47 5 48C11 41 13 29 14 16L20 16C20 34 19 40 18 42C18 43 17 43 17 43C16 43 14 43 12 42C12 44 13 46 13 47C15 47 17 47 19 47C20 47 21 46 22 45C24 43 24 35 25 13C25 13 25 11 25 11L14 11L14 2Z","务":"M22 25C22 27 21 28 21 30L6 30L6 34L19 34C16 39 11 43 3 44C4 45 5 47 5 48C15 46 21 42 24 34L39 34C38 40 37 42 36 43C35 44 35 44 34 44C32 44 29 44 26 43C26 44 27 46 27 48C30 48 33 48 35 48C37 48 38 47 40 46C41 44 43 41 44 32C44 31 44 30 44 30L26 30C26 28 26 27 27 25ZM36 11C34 13 30 16 25 17C22 16 19 14 16 11L17 11ZM19 2C16 6 11 11 4 14C5 15 6 17 7 18C9 17 11 15 13 14C15 16 17 18 20 19C14 21 8 22 2 22C3 23 4 25 4 26C11 26 19 24 25 22C31 24 38 25 46 26C46 24 47 23 48 22C42 21 36 20 31 19C36 16 41 13 44 8L41 7L40 7L21 7C22 5 23 4 24 3Z","助":"M31 2C31 6 31 9 31 13L23 13L23 17L31 17C30 29 28 39 18 45C20 46 21 47 22 48C32 42 34 31 35 17L42 17C42 35 41 41 40 43C39 43 39 44 38 44C37 44 35 43 32 43C33 44 33 46 33 48C36 48 39 48 40 48C42 48 43 47 44 46C46 43 46 36 47 15C47 15 47 13 47 13L36 13C36 9 36 6 36 2ZM2 38L2 43C8 42 17 40 25 38L24 34L22 34L22 4L5 4L5 38ZM9 37L9 29L17 29L17 35ZM9 19L17 19L17 25L9 25ZM9 15L9 8L17 8L17 15Z","单":"M12 22L22 22L22 27L12 27ZM27 22L38 22L38 27L27 27ZM12 14L22 14L22 19L12 19ZM27 14L38 14L38 19L27 19ZM35 2C34 5 32 8 30 10L19 10L21 9C20 7 17 4 15 2L11 4C13 6 15 8 16 10L7 10L7 31L22 31L22 35L3 35L3 39L22 39L22 48L27 48L27 39L48 39L48 35L27 35L27 31L43 31L43 10L35 10C37 8 39 6 40 4Z","厂":"M7 5L7 20C7 28 7 38 2 45C3 46 5 47 6 48C11 40 12 28 12 20L12 10L47 10L47 5Z","叶":"M4 7L4 39L8 39L8 36L19 36L19 23L31 23L31 48L36 48L36 23L48 23L48 19L36 19L36 3L31 3L31 19L19 19L19 7ZM8 11L15 11L15 31L8 31Z","号":"M14 8L36 8L36 14L14 14ZM9 4L9 18L41 18L41 4ZM3 22L3 26L13 26C12 29 11 33 10 35L36 35C35 40 34 42 33 43C32 44 31 44 30 44C29 44 25 44 22 43C23 45 23 47 23 48C27 48 30 48 32 48C34 48 35 48 37 46C39 45 40 41 41 33C41 32 41 31 41 31L17 31L18 26L47 26L47 22Z","合":"M26 2C20 9 11 16 2 20C3 21 4 22 5 24C8 23 10 21 12 20L12 22L38 22L38 19C40 21 43 22 45 23C46 22 47 20 49 19C41 16 34 12 28 6L30 4ZM15 18C19 16 22 13 25 9C29 13 32 16 36 18ZM10 28L10 48L14 48L14 46L36 46L36 48L41 48L41 28ZM14 41L14 32L36 32L36 41Z","名":"M13 18C15 20 18 22 20 24C14 27 8 29 2 30C3 31 4 33 4 34C7 34 10 33 12 32L12 48L17 48L17 46L38 46L38 48L43 48L43 27L24 27C32 22 39 16 42 8L39 6L38 7L22 7C23 5 24 4 25 3L20 2C17 6 11 12 3 15C4 16 6 18 6 19C11 17 15 14 18 11L35 11C33 15 29 18 24 21C22 19 19 17 16 15ZM38 41L17 41L17 31L38 31Z","员":"M14 8L36 8L36 13L14 13ZM9 4L9 17L41 17L41 4ZM22 28L22 33C22 36 21 41 3 45C4 46 6 47 6 48C25 44 27 38 27 33L27 28ZM27 41C33 43 41 46 45 48L47 44C43 42 35 40 29 38ZM7 21L7 39L12 39L12 25L38 25L38 39L43 39L43 21Z","品":"M16 8L34 8L34 17L16 17ZM11 4L11 21L39 21L39 4ZM4 26L4 48L8 48L8 46L18 46L18 48L22 48L22 26ZM8 41L8 31L18 31L18 41ZM27 26L27 48L32 48L32 46L42 46L42 48L46 48L46 26ZM32 41L32 31L42 31L42 41Z","地":"M21 7L21 20L16 22L18 26L21 25L21 40C21 46 23 47 29 47C31 47 39 47 41 47C46 47 48 45 48 38C47 38 45 37 44 36C44 42 43 43 41 43C39 43 31 43 30 43C26 43 26 42 26 40L26 23L31 21L31 37L36 37L36 19L42 16C42 24 42 29 41 30C41 31 41 31 40 31C40 31 38 31 37 31C38 32 38 34 38 35C40 35 42 35 43 34C45 34 46 33 46 31C46 29 46 22 46 12L46 11L43 10L42 11L41 12L36 14L36 2L31 2L31 16L26 18L26 7ZM1 36L3 41C8 39 14 36 19 33L18 29L13 31L13 18L18 18L18 14L13 14L13 2L8 2L8 14L2 14L2 18L8 18L8 33C6 34 3 35 1 36Z","址":"M21 13L21 42L16 42L16 46L48 46L48 42L37 42L37 23L47 23L47 19L37 19L37 2L32 2L32 42L26 42L26 13ZM2 35L3 40C8 38 14 36 20 33L19 29L13 31L13 18L19 18L19 14L13 14L13 2L9 2L9 14L2 14L2 18L9 18L9 33C6 34 3 35 2 35Z","型":"M31 5L31 22L36 22L36 5ZM40 2L40 24C40 25 40 25 40 25C39 25 36 25 34 25C34 26 35 28 35 29C39 29 41 29 43 28C45 28 45 27 45 24L45 2ZM19 8L19 14L14 14L14 8ZM8 32L8 37L23 37L23 42L2 42L2 46L48 46L48 42L28 42L28 37L42 37L42 32L28 32L28 28L23 28L23 18L29 18L29 14L23 14L23 8L28 8L28 4L5 4L5 8L9 8L9 14L3 14L3 18L9 18C8 21 6 24 2 26C3 27 5 29 6 30C11 27 13 22 13 18L19 18L19 28L23 28L23 32Z","增":"M23 14C25 17 26 20 27 22L29 20C29 18 27 16 26 13ZM38 13C37 16 36 19 35 21L37 22C38 20 40 17 41 15ZM2 37L3 42C7 40 13 38 17 36L17 32L12 34L12 18L17 18L17 14L12 14L12 2L8 2L8 14L2 14L2 18L8 18L8 35ZM19 9L19 26L46 26L46 9L39 9C41 7 42 5 43 3L38 2C38 4 36 7 35 9L26 9L29 7C29 6 27 4 26 2L22 3C23 5 24 7 25 9ZM22 12L30 12L30 23L22 23ZM34 12L42 12L42 23L34 23ZM25 39L39 39L39 42L25 42ZM25 36L25 32L39 32L39 36ZM21 29L21 48L25 48L25 46L39 46L39 48L44 48L44 29Z","备":"M33 10C31 12 28 14 25 16C22 14 19 13 17 10ZM18 2C16 6 11 11 3 14C4 15 6 16 7 17C9 16 11 15 13 13C15 15 17 17 20 18C14 20 8 22 1 22C2 24 3 26 3 27C11 26 18 24 25 21C31 24 38 25 46 26C47 25 48 23 49 22C42 21 36 20 30 18C35 15 38 12 41 8L38 6L37 6L21 6C22 5 23 4 23 3ZM13 38L22 38L22 43L13 43ZM13 34L13 30L22 30L22 34ZM36 38L36 43L27 43L27 38ZM36 34L27 34L27 30L36 30ZM8 26L8 48L13 48L13 47L36 47L36 48L42 48L42 26Z","大":"M22 2C22 6 22 11 22 16L3 16L3 21L21 21C19 30 14 39 2 44C3 45 5 47 6 48C17 43 22 34 25 25C29 36 35 44 45 48C45 47 47 45 48 44C39 40 32 31 29 21L47 21L47 16L27 16C27 11 28 6 28 2Z","子":"M23 17L23 24L2 24L2 29L23 29L23 42C23 43 22 43 21 43C20 43 16 43 13 43C13 45 14 47 15 48C19 48 23 48 25 47C27 47 28 45 28 42L28 29L48 29L48 24L28 24L28 19C33 16 40 12 44 7L40 5L39 5L7 5L7 10L34 10C31 12 27 15 23 17Z","实":"M27 40C33 42 40 45 44 48L47 44C43 41 36 38 29 36ZM12 16C14 18 18 20 19 22L22 19C20 17 17 15 15 13ZM7 24C10 26 13 28 14 30L17 26C16 24 12 22 10 21ZM4 7L4 18L9 18L9 11L41 11L41 18L46 18L46 7L29 7C28 5 27 3 26 1L21 3C22 4 23 6 23 7ZM4 31L4 35L21 35C18 39 13 42 4 44C5 45 6 47 7 48C18 45 23 41 26 35L47 35L47 31L28 31C29 26 30 20 30 14L25 14C24 21 24 26 23 31Z","客":"M18 18L32 18C30 20 28 22 25 24C22 22 20 20 18 18ZM19 11C16 15 12 19 5 22C6 22 7 24 8 25C10 24 13 22 15 21C17 23 18 24 21 26C15 29 8 30 2 32C2 33 3 34 4 36C6 35 9 35 11 34L11 48L16 48L16 47L34 47L34 48L39 48L39 34C41 34 43 35 45 35C46 34 47 31 48 30C42 30 35 28 30 26C34 23 37 20 39 16L36 14L35 14L22 14C23 14 23 13 24 12ZM25 28C28 30 32 32 36 33L15 33C19 32 22 30 25 28ZM16 43L16 37L34 37L34 43ZM21 2C22 4 22 5 23 6L4 6L4 16L8 16L8 10L42 10L42 16L46 16L46 6L29 6C28 5 27 3 26 1Z","家":"M21 3C21 4 22 5 22 6L4 6L4 17L8 17L8 10L42 10L42 17L46 17L46 6L28 6C28 5 27 3 26 1ZM39 20C37 22 32 25 29 28C28 25 26 23 24 21C25 20 26 19 27 18L39 18L39 14L11 14L11 18L21 18C16 21 10 24 4 25C4 26 6 28 6 29C11 27 16 25 20 23C21 24 22 24 22 25C18 28 10 32 4 33C4 34 5 36 6 37C12 35 19 32 24 28C25 29 25 30 25 31C20 36 11 40 3 42C4 43 5 45 5 46C12 44 20 40 26 36C26 39 26 42 24 43C24 44 23 44 21 44C20 44 19 44 17 44C18 45 18 47 18 48C20 48 21 48 22 48C25 48 26 48 28 46C31 44 32 38 30 32L32 30C35 38 39 43 45 46C46 45 48 43 49 42C42 40 38 34 36 28C38 26 41 25 43 23Z","州":"M12 3L12 18C12 27 11 37 3 44C4 45 5 47 6 48C15 40 16 29 16 18L16 3ZM26 4L26 45L30 45L30 4ZM40 2L40 48L45 48L45 2ZM6 14C5 19 3 24 1 28L5 29C8 26 9 20 10 15ZM17 16C18 21 20 26 20 29L24 28C24 24 22 19 20 15ZM31 16C33 20 35 26 36 29L40 27C39 24 36 18 34 15Z","工":"M2 40L2 45L48 45L48 40L28 40L28 12L45 12L45 7L5 7L5 12L22 12L22 40Z","已":"M5 5L5 9L37 9L37 22L12 22L12 14L7 14L7 38C7 45 10 47 18 47C20 47 34 47 36 47C45 47 47 44 48 35C47 34 44 34 43 33C42 41 42 42 36 42C33 42 21 42 18 42C13 42 12 42 12 38L12 26L37 26L37 29L42 29L42 5Z","市":"M20 3C21 5 22 7 23 9L2 9L2 14L22 14L22 20L7 20L7 43L12 43L12 24L22 24L22 48L27 48L27 24L39 24L39 37C39 38 38 38 38 38C37 38 34 38 31 38C31 39 32 41 32 43C36 43 39 42 41 42C43 41 44 40 44 37L44 20L27 20L27 14L48 14L48 9L29 9C28 7 26 4 25 1Z","帮":"M22 27L22 31L8 31C13 29 15 26 17 23L27 23L27 19L18 19L18 18L18 16L26 16L26 12L18 12L18 9L27 9L27 6L18 6L18 2L13 2L13 6L3 6L3 9L13 9L13 12L4 12L4 16L13 16L13 18C13 18 13 19 13 19L2 19L2 23L11 23C10 25 7 27 3 28C4 29 6 30 6 31L7 31L7 45L12 45L12 35L22 35L22 48L27 48L27 35L39 35L39 41C39 41 39 41 38 41C37 42 34 42 31 41C32 43 32 44 33 46C37 46 40 45 41 45C43 44 44 43 44 41L44 31L27 31L27 27ZM29 4L29 29L33 29L33 8L41 8C39 10 38 12 37 14C41 17 42 19 42 20C42 21 42 22 41 22C40 23 40 23 39 23C38 23 36 23 34 23C35 24 36 25 36 27C38 27 40 27 41 26C42 26 44 26 44 26C46 25 47 23 47 21C47 19 46 16 42 14C44 11 46 8 47 6L44 4L43 4Z","应":"M13 20C15 25 18 32 18 37L23 35C22 30 19 23 17 18ZM24 17C25 22 27 29 28 34L32 32C31 28 30 21 28 15ZM23 2C24 4 25 6 25 8L6 8L6 22C6 29 5 39 2 46C3 46 5 48 6 49C10 41 11 29 11 22L11 12L47 12L47 8L31 8C30 6 29 3 28 1ZM11 42L11 46L48 46L48 42L35 42C39 34 43 25 45 17L40 15C38 24 35 34 30 42Z","张":"M42 4C39 9 35 13 30 16C31 17 33 19 34 20C39 16 43 11 46 5ZM6 15C5 20 5 27 4 31L6 31L14 31C13 39 13 42 12 43C11 44 11 44 10 44C9 44 7 44 4 44C5 45 6 46 6 48C8 48 11 48 12 48C14 48 15 47 16 46C17 45 18 40 18 29C18 28 19 27 19 27L9 27L10 19L18 19L18 3L4 3L4 8L14 8L14 15ZM24 48C24 48 26 47 36 43C36 42 36 40 36 38L29 41L29 25L33 25C35 35 39 43 46 47C46 46 48 45 49 44C43 40 39 33 37 25L48 25L48 21L29 21L29 3L24 3L24 21L19 21L19 25L24 25L24 41C24 43 23 44 22 44C22 45 23 47 24 48Z","待":"M20 34C23 37 25 41 26 43L30 41C29 38 26 35 24 32ZM12 2C10 5 6 9 2 12C3 13 4 15 4 16C9 13 14 8 17 4ZM30 2L30 8L19 8L19 12L30 12L30 18L16 18L16 22L37 22L37 27L17 27L17 31L37 31L37 43C37 44 37 44 36 44C35 44 32 44 30 44C30 45 31 47 31 48C35 48 38 48 39 47C41 47 42 45 42 43L42 31L48 31L48 27L42 27L42 22L48 22L48 18L35 18L35 12L46 12L46 8L35 8L35 2ZM13 13C10 18 6 23 1 26C2 27 3 30 4 31C5 30 7 28 9 26L9 48L13 48L13 21C15 19 16 17 17 15Z","心":"M15 16L15 40C15 46 16 47 22 47C24 47 30 47 32 47C38 47 39 44 40 35C38 35 36 34 35 33C35 41 34 43 31 43C30 43 24 43 23 43C20 43 20 42 20 40L20 16ZM6 19C6 26 4 33 2 38L7 40C9 35 10 26 11 20ZM38 20C40 26 43 33 44 39L49 37C48 32 45 24 42 18ZM17 6C22 10 28 14 30 18L34 14C31 11 25 6 20 3Z","总":"M38 33C40 37 43 42 44 45L48 42C47 39 44 35 41 31ZM14 32L14 42C14 46 15 48 22 48C23 48 31 48 33 48C38 48 39 46 40 40C38 40 36 39 35 39C35 43 35 43 32 43C30 43 24 43 22 43C19 43 19 43 19 42L19 32ZM6 32C6 36 4 41 2 43L6 46C8 42 10 38 11 33ZM14 16L36 16L36 24L14 24ZM9 12L9 28L24 28L21 31C24 33 28 37 29 39L33 36C31 34 27 30 24 28L41 28L41 12L34 12C35 9 37 6 39 4L34 2C32 5 30 9 29 12L19 12L22 10C21 8 19 4 16 2L12 4C14 6 16 9 17 12Z","息":"M14 17L36 17L36 20L14 20ZM14 24L36 24L36 27L14 27ZM14 10L36 10L36 13L14 13ZM13 34L13 41C13 46 15 47 21 47C22 47 30 47 32 47C37 47 38 46 39 39C38 39 36 38 34 37C34 42 34 43 31 43C29 43 23 43 21 43C18 43 18 43 18 41L18 34ZM38 34C40 38 42 42 43 45L48 43C47 40 44 36 42 33ZM7 33C6 37 4 41 2 44L6 46C8 43 10 38 11 35ZM21 32C23 34 26 38 27 40L31 38C30 36 27 33 25 30L40 30L40 6L26 6C27 5 28 4 28 2L23 1C22 3 22 5 21 6L9 6L9 30L24 30Z","惠":"M13 36L13 42C13 46 15 48 21 48C22 48 30 48 32 48C36 48 38 46 38 40C37 40 35 40 34 39C34 43 34 44 31 44C29 44 23 44 21 44C18 44 18 43 18 42L18 36ZM37 37C40 40 42 44 43 46L47 45C46 42 44 38 42 35ZM7 35C6 38 4 42 2 44L6 47C8 44 10 40 11 37ZM20 35C23 37 27 39 28 41L32 38C30 37 27 34 24 33L41 32C42 33 43 34 43 35L47 32C44 30 40 27 36 26L43 26L43 11L27 11L27 8L46 8L46 5L27 5L27 2L22 2L22 5L4 5L4 8L22 8L22 11L7 11L7 26L22 26L22 29L4 29L4 33C9 33 16 33 23 33ZM11 20L22 20L22 23L11 23ZM27 20L38 20L38 23L27 23ZM11 14L22 14L22 17L11 17ZM27 14L38 14L38 17L27 17ZM32 27C33 28 34 28 35 29L27 29L27 26L34 26Z","户":"M13 14L38 14L38 23L13 23L13 21ZM22 3C22 5 24 8 24 9L8 9L8 21C8 28 7 38 2 46C3 46 5 48 6 49C10 43 12 35 13 27L38 27L38 30L43 30L43 9L26 9L29 9C29 7 27 4 26 2Z","报":"M26 25C28 30 31 35 34 39C31 41 29 43 26 45L26 25ZM31 25L41 25C40 29 39 32 37 35C34 32 32 29 31 25ZM21 4L21 48L26 48L26 45C27 46 28 47 28 48C32 47 34 45 37 42C39 45 42 47 45 48C46 47 47 45 48 44C45 43 42 41 40 38C43 34 46 28 47 22L44 21L43 21L26 21L26 8L40 8C40 12 40 13 39 14C39 14 38 14 37 14C36 14 33 14 30 14C31 15 31 17 31 18C35 18 38 18 39 18C41 18 42 18 43 17C44 15 45 12 45 5C45 5 45 4 45 4ZM9 2L9 12L2 12L2 16L9 16L9 26L1 28L3 33L9 31L9 43C9 43 9 44 8 44C7 44 4 44 2 44C3 45 3 47 3 48C7 48 10 48 12 47C13 47 14 45 14 43L14 30L19 28L19 23L14 25L14 16L19 16L19 12L14 12L14 2Z","按":"M38 26C37 30 36 33 34 36C31 35 29 33 27 32C28 30 29 28 30 26ZM8 2L8 12L2 12L2 16L8 16L8 28C6 28 3 29 1 30L2 34L8 32L8 43C8 44 8 44 7 44C7 44 5 44 3 44C3 45 4 47 4 48C7 48 10 48 11 47C12 47 13 45 13 43L13 31L19 29L18 26L25 26C23 29 22 32 21 34C24 35 27 37 30 39C27 42 23 43 18 44C19 45 20 47 20 48C26 47 31 45 35 42C39 44 42 46 45 48L48 45C46 43 42 40 38 38C40 35 42 31 43 26L48 26L48 21L31 21C32 19 33 17 34 15L29 14C28 16 27 19 26 21L18 21L18 25L13 26L13 16L18 16L18 12L13 12L13 2ZM19 8L19 18L24 18L24 12L43 12L43 18L47 18L47 8L36 8C36 6 35 4 34 2L29 2C30 4 30 6 31 8Z","据":"M24 32L24 48L28 48L28 46L42 46L42 48L47 48L47 32L37 32L37 27L48 27L48 23L37 23L37 18L46 18L46 4L19 4L19 19C19 27 19 38 14 46C15 46 17 47 18 48C22 42 23 34 24 27L33 27L33 32ZM24 8L42 8L42 13L24 13ZM24 18L33 18L33 23L24 23L24 19ZM28 43L28 36L42 36L42 43ZM8 2L8 12L2 12L2 16L8 16L8 26L1 28L2 32L8 31L8 42C8 43 8 43 7 43C6 43 4 43 2 43C3 45 4 47 4 48C7 48 9 48 10 47C12 46 12 45 12 42L12 29L18 28L17 23L12 25L12 16L18 16L18 12L12 12L12 2Z","接":"M8 2L8 12L2 12L2 16L8 16L8 26C5 27 3 27 1 28L2 32L8 31L8 43C8 43 7 44 7 44C6 44 4 44 2 44C3 45 4 47 4 48C7 48 9 48 10 47C11 46 12 45 12 43L12 29L17 28L16 24L12 25L12 16L17 16L17 12L12 12L12 2ZM28 3C29 4 30 5 30 7L19 7L19 11L47 11L47 7L35 7C34 5 34 4 33 2ZM38 11C37 13 36 16 34 18L27 18L30 17C29 15 28 13 26 11L23 12C24 14 25 17 26 18L18 18L18 22L48 22L48 18L39 18C40 16 41 14 42 12ZM20 37C23 38 26 40 30 41C26 43 22 44 16 44C17 45 18 47 18 48C25 47 30 46 34 43C38 45 42 47 44 48L47 45C45 43 42 42 38 40C40 38 41 35 42 31L48 31L48 27L31 27C32 26 32 25 33 23L29 22C28 24 27 26 26 27L17 27L17 31L24 31C22 34 21 36 20 37ZM38 31C37 34 36 36 34 38C31 37 29 36 26 35C27 34 28 33 29 31Z","操":"M27 7L37 7L37 12L27 12ZM23 4L23 15L42 15L42 4ZM22 20L27 20L27 25L22 25ZM37 20L43 20L43 25L37 25ZM7 2L7 12L2 12L2 16L7 16L7 26C5 27 3 28 2 28L3 32L7 31L7 43C7 43 7 44 7 44C6 44 5 44 3 44C4 45 4 47 5 48C7 48 9 48 10 47C11 46 12 45 12 43L12 29L17 27L16 23L12 25L12 16L16 16L16 12L12 12L12 2ZM17 32L17 36L28 36C24 39 19 42 14 44C15 44 16 46 17 47C22 46 26 43 30 39L30 48L34 48L34 39C38 42 42 45 46 47C46 46 48 44 49 43C44 42 40 39 37 36L48 36L48 32L34 32L34 29L47 29L47 17L33 17L33 28L31 28L31 17L18 17L18 29L30 29L30 32Z","收":"M30 16L40 16C39 22 38 27 35 31C33 27 31 22 30 17ZM29 2C27 10 25 18 21 23C22 24 23 26 24 28C25 26 26 24 27 22C29 27 31 31 33 35C30 39 26 42 22 44C23 45 24 47 25 48C29 46 33 43 35 39C38 43 41 46 45 48C46 47 47 45 48 44C44 42 41 39 38 35C41 30 43 24 45 16L48 16L48 11L32 11C32 9 33 6 34 3ZM5 40C6 39 7 38 16 35L16 48L21 48L21 3L16 3L16 30L9 32L9 7L5 7L5 32C5 34 4 35 3 35C4 36 4 38 5 40Z","改":"M31 15L40 15C39 21 38 26 36 31C33 26 32 21 31 16ZM4 5L4 10L17 10L17 19L4 19L4 38C4 40 3 41 2 41C3 42 4 45 4 46C6 45 8 44 22 39C22 38 22 36 22 34L9 39L9 24L22 24C23 25 24 26 25 27C26 26 27 24 28 22C29 27 31 31 33 35C30 39 26 42 21 44C22 45 23 47 24 48C29 46 32 43 36 39C38 43 41 46 45 48C46 47 48 45 49 44C44 42 41 39 38 35C42 30 44 23 45 15L48 15L48 11L32 11C33 8 34 5 34 3L30 2C28 10 26 18 22 23L22 5Z","数":"M22 3C21 4 19 7 18 9L21 11C23 9 24 6 26 4ZM4 4C5 6 6 9 7 11L10 9C10 7 9 5 7 3ZM20 32C19 34 17 36 16 37C14 36 12 36 11 35L12 32ZM5 36C7 37 10 39 12 40C9 42 6 43 2 44C3 45 3 47 4 48C8 47 13 45 16 42C18 43 19 44 20 45L23 42C22 41 21 40 19 39C22 36 24 33 25 28L22 27L22 28L14 28L15 25L11 24C11 26 10 27 10 28L3 28L3 32L8 32C7 33 6 35 5 36ZM12 2L12 11L2 11L2 15L11 15C8 18 5 20 2 22C2 23 4 24 4 25C7 24 10 21 12 19L12 24L17 24L17 18C19 19 21 21 23 22L25 19C24 18 20 16 18 15L27 15L27 11L17 11L17 2ZM31 2C30 11 28 19 24 25C25 25 26 27 27 28C28 26 29 24 30 22C31 26 33 30 34 34C32 39 28 42 22 45C23 45 25 47 25 48C30 46 34 43 37 38C39 42 42 46 46 48C46 47 48 45 49 44C45 42 42 38 39 34C42 29 43 23 44 16L48 16L48 11L34 11C34 9 35 6 35 3ZM40 16C39 21 38 25 37 29C35 25 34 20 33 16Z","文":"M21 3C22 5 24 8 24 10L2 10L2 15L10 15C13 22 17 29 22 34C16 38 10 41 2 44C2 45 4 47 4 48C13 46 20 42 25 37C31 42 37 46 45 48C46 46 48 44 49 43C41 42 34 38 29 34C34 29 37 23 40 15L48 15L48 10L25 10L30 9C29 7 27 4 26 1ZM25 31C21 26 18 21 15 15L35 15C32 21 29 26 25 31Z","日":"M13 27L37 27L37 40L13 40ZM13 22L13 10L37 10L37 22ZM8 5L8 48L13 48L13 44L37 44L37 47L42 47L42 5Z","是":"M12 14L37 14L37 17L12 17ZM12 7L37 7L37 10L12 10ZM8 4L8 21L42 21L42 4ZM11 29C10 36 7 42 2 45C3 46 4 47 5 48C8 46 11 43 12 40C17 46 23 47 33 47L47 47C47 46 48 44 48 43C45 43 35 43 33 43C31 43 29 43 28 43L28 37L44 37L44 32L28 32L28 28L47 28L47 24L3 24L3 28L23 28L23 42C19 41 16 39 15 34C15 33 15 31 16 30Z","有":"M19 2C18 4 18 6 17 8L3 8L3 13L15 13C12 19 7 25 2 28C3 29 4 31 5 32C8 30 10 28 12 25L12 48L17 48L17 38L37 38L37 43C37 43 36 44 36 44C35 44 32 44 29 44C29 45 30 47 30 48C34 48 37 48 39 47C41 47 41 45 41 43L41 18L18 18C18 16 19 14 20 13L47 13L47 8L22 8C23 6 23 5 24 3ZM17 30L37 30L37 34L17 34ZM17 26L17 22L37 22L37 26Z","服":"M5 4L5 22C5 29 5 39 1 46C3 46 4 48 5 48C8 44 8 37 9 31L16 31L16 43C16 43 16 44 15 44C14 44 12 44 10 44C11 45 11 47 11 48C15 48 17 48 18 47C20 47 20 45 20 43L20 4ZM9 8L16 8L16 15L9 15ZM9 20L16 20L16 27L9 27L9 22ZM42 25C41 29 40 32 38 35C36 32 34 29 33 25ZM24 4L24 48L28 48L28 45C29 45 30 47 31 48C34 46 36 44 38 42C40 45 43 47 46 48C46 47 48 45 49 45C46 43 43 41 41 39C44 34 46 28 47 22L45 21L44 21L28 21L28 8L41 8L41 13C41 14 41 14 40 14C40 14 37 14 34 14C34 15 35 17 35 18C39 18 42 18 44 17C45 17 46 16 46 13L46 4ZM29 25C31 30 33 35 35 39C33 41 31 43 28 44L28 25Z","期":"M8 37C7 40 4 43 2 46C3 46 5 47 5 48C8 46 11 42 13 38ZM16 39C18 41 20 44 21 46L25 44C24 42 21 39 19 37ZM42 8L42 16L33 16L33 8ZM29 4L29 22C29 30 28 39 24 46C25 46 27 48 28 48C31 44 32 37 33 31L42 31L42 43C42 43 42 44 41 44C40 44 38 44 35 44C36 45 37 47 37 48C40 48 43 48 44 47C46 46 47 45 47 43L47 4ZM42 20L42 27L33 27L33 22L33 20ZM19 2L19 8L11 8L11 2L6 2L6 8L2 8L2 12L6 12L6 32L2 32L2 36L26 36L26 32L23 32L23 12L27 12L27 8L23 8L23 2ZM11 12L19 12L19 16L11 16ZM11 20L19 20L19 24L11 24ZM11 28L19 28L19 32L11 32Z","未":"M22 2L22 10L7 10L7 14L22 14L22 22L3 22L3 27L20 27C16 33 8 39 1 42C2 43 4 44 5 46C11 42 18 37 22 31L22 48L27 48L27 31C32 37 39 42 45 46C46 44 47 43 49 42C42 39 34 33 30 27L47 27L47 22L27 22L27 14L44 14L44 10L27 10L27 2Z","板":"M9 2L9 11L3 11L3 16L9 16C7 22 4 30 1 34C2 35 3 37 4 38C6 35 8 30 9 25L9 48L14 48L14 23C15 25 16 28 17 30L20 26C19 24 15 19 14 17L14 16L19 16L19 11L14 11L14 2ZM44 2C39 5 29 6 21 6L21 18C21 26 21 38 15 46C16 46 18 48 19 48C24 41 26 29 26 20L27 20C28 27 30 32 33 37C30 40 26 43 22 44C23 45 24 47 25 48C29 46 33 44 36 41C38 44 42 46 45 48C46 47 48 45 49 44C45 43 41 40 39 37C42 32 45 25 46 17L43 16L42 16L26 16L26 10C33 10 42 8 47 6ZM41 20C40 25 38 29 36 33C34 29 32 25 31 20Z","架":"M32 10L41 10L41 19L32 19ZM28 6L28 23L46 23L46 6ZM22 25L22 29L3 29L3 33L19 33C15 38 8 42 2 44C3 44 4 46 5 47C11 45 18 41 22 36L22 48L27 48L27 36C32 41 39 45 45 47C46 46 47 44 48 43C41 41 35 37 30 33L47 33L47 29L27 29L27 25ZM10 2C10 4 10 5 10 7L3 7L3 11L9 11C8 16 6 20 2 23C3 23 4 25 4 26C10 23 13 18 14 11L20 11C20 17 19 19 19 20C18 20 18 20 17 20C16 20 15 20 13 20C14 21 14 23 14 24C16 24 18 24 19 24C21 24 22 24 22 23C24 21 24 18 25 9C25 8 25 7 25 7L14 7C15 5 15 4 15 2Z","查":"M15 33L34 33L34 37L15 37ZM15 26L34 26L34 30L15 30ZM11 23L11 40L39 40L39 23ZM3 42L3 47L47 47L47 42ZM22 2L22 8L3 8L3 12L18 12C14 16 7 20 2 22C3 23 4 25 5 26C11 23 18 18 22 13L22 22L27 22L27 13C32 18 39 23 45 26C46 24 47 23 48 22C42 20 36 16 32 12L47 12L47 8L27 8L27 2Z","格":"M29 11L39 11C38 14 36 16 34 19C32 16 30 14 29 12ZM10 2L10 12L2 12L2 17L9 17C8 23 4 31 1 35C2 36 3 38 4 39C6 36 8 31 10 26L10 48L14 48L14 24C15 26 16 28 17 29C18 30 19 32 20 33C21 32 22 32 23 32L23 48L27 48L27 46L40 46L40 48L44 48L44 31L46 32C47 31 48 29 49 28C44 26 40 24 37 22C40 18 43 14 45 8L42 7L41 7L32 7C32 6 33 4 33 3L29 2C27 7 24 12 20 15L20 12L14 12L14 2ZM27 42L27 34L40 34L40 42ZM27 30C29 28 32 27 34 25C36 27 38 28 41 30ZM26 16C27 18 29 20 31 22C27 25 23 27 18 29L20 26C19 25 15 20 14 19L14 17L18 17C19 18 21 19 22 20C23 19 25 17 26 16Z","档":"M42 5C41 9 39 14 38 17L41 18C43 15 45 10 47 6ZM20 6C21 10 23 15 24 18L28 16C27 13 25 9 23 5ZM9 2L9 12L2 12L2 17L8 17C7 23 4 31 1 35C2 36 3 38 3 39C6 36 8 31 9 26L9 48L14 48L14 24C15 27 17 30 17 31L20 28C19 26 15 20 14 19L14 17L20 17L20 12L14 12L14 2ZM18 40L18 45L41 45L41 48L46 48L46 20L35 20L35 2L31 2L31 20L20 20L20 25L41 25L41 30L20 30L20 35L41 35L41 40Z","欠":"M13 1C11 10 7 18 2 23C4 24 6 25 7 26C10 23 12 19 14 14L40 14C39 18 37 22 36 24L40 26C42 22 45 16 47 11L43 9L42 10L16 10C17 7 18 5 18 2ZM22 17L22 20C22 27 21 38 2 44C3 45 4 47 5 48C17 44 23 37 25 31C29 40 35 46 45 48C46 47 47 45 48 44C37 41 30 34 27 24C27 23 27 22 27 20L27 17Z","款":"M6 33C4 37 3 40 1 43C2 43 4 44 5 45C6 42 8 38 9 34ZM19 34C20 37 21 40 22 43L26 41C25 39 23 36 22 33ZM33 19L33 21C33 28 33 38 24 45C25 46 27 47 28 48C32 44 35 39 36 35C38 41 41 45 46 48C46 47 48 45 49 44C43 41 39 34 38 26C38 24 38 23 38 21L38 19ZM12 2L12 6L2 6L2 10L12 10L12 14L4 14L4 18L25 18L25 14L16 14L16 10L26 10L26 6L16 6L16 2ZM2 28L2 32L12 32L12 43C12 44 12 44 11 44C11 44 9 44 7 44C8 45 8 47 8 48C11 48 13 48 15 47C16 47 16 46 16 44L16 32L26 32L26 28ZM44 11L43 11L33 11C33 8 34 5 34 2L30 2C29 9 27 17 24 22L24 21L4 21L4 25L24 25L24 23C25 24 27 25 27 25C29 23 30 19 32 15L43 15C42 18 41 22 40 24L44 25C46 22 47 16 48 12L45 11Z","汽":"M22 15L22 19L44 19L44 15ZM5 6C7 8 11 10 13 12L16 8C14 6 10 4 7 3ZM2 20C4 21 8 23 10 25L13 21C11 20 7 18 4 16ZM3 44L7 47C10 43 13 37 15 32L12 29C9 34 6 40 3 44ZM23 2C21 7 18 13 14 16C15 17 17 18 18 19C20 17 22 14 23 12L48 12L48 7L25 7C26 6 27 4 27 3ZM17 22L17 27L38 27C38 40 39 48 44 48C48 48 48 46 49 40C48 39 47 38 46 37C46 41 46 44 45 44C43 44 42 35 42 22Z","注":"M5 6C8 7 12 10 14 11L17 8C15 6 10 4 7 2ZM2 20C5 21 9 24 11 25L14 21C12 20 8 18 4 16ZM3 44L7 48C10 43 14 37 16 32L13 29C10 34 6 41 3 44ZM27 3C29 6 31 9 31 11L17 11L17 16L30 16L30 26L19 26L19 30L30 30L30 42L15 42L15 47L48 47L48 42L35 42L35 30L45 30L45 26L35 26L35 16L47 16L47 11L31 11L36 10C35 7 33 4 32 2Z","海":"M5 6C8 7 12 10 13 11L16 8C14 6 10 4 7 2ZM2 20C5 22 8 24 10 26L13 22C11 20 7 18 5 17ZM3 45L8 47C10 43 12 36 14 31L10 29C8 34 5 41 3 45ZM28 21C30 22 32 24 33 26L24 26L25 20L30 20ZM14 26L14 30L19 30C18 34 18 38 17 41L39 41C38 42 38 43 38 43C37 44 37 44 36 44C35 44 33 44 30 44C31 45 32 47 32 48C34 48 36 48 38 48C39 48 41 47 42 46C42 45 43 43 43 41L47 41L47 37L44 37C44 35 44 33 44 30L48 30L48 26L45 26L45 18C45 17 45 16 45 16L21 16C20 19 20 22 19 26ZM27 31C29 33 31 35 32 37L22 37L23 30L29 30ZM31 20L40 20L40 26L34 26L36 24C35 23 33 21 31 20ZM30 30L40 30C40 33 40 35 39 37L33 37L35 35C34 34 32 32 30 30ZM22 2C20 7 17 13 14 17C15 18 17 19 18 20C19 17 21 15 23 11L47 11L47 7L25 7C25 6 26 4 26 3Z","添":"M20 30C19 33 17 38 14 40L17 43C20 40 22 35 24 31ZM32 32C33 35 35 39 35 42L39 41C38 38 37 34 35 30ZM38 30C41 34 44 39 45 43L49 41C47 37 45 32 42 29ZM26 24L26 43C26 44 26 44 26 44C25 44 23 44 21 44C21 45 22 47 22 48C25 48 27 48 29 47C30 47 31 46 31 43L31 24ZM4 6C7 7 10 9 12 11L15 7C13 6 10 3 7 2ZM2 19C5 20 8 23 10 24L13 20C11 19 7 17 4 16ZM3 45L7 48C9 43 12 37 14 32L10 29C8 35 5 41 3 45ZM17 4L17 9L27 9C26 11 26 13 25 15L14 15L14 19L23 19C20 23 17 26 13 28C14 29 15 31 16 32C21 29 25 24 28 19L34 19C36 24 41 28 46 31C46 30 48 28 49 27C45 25 41 22 39 19L48 19L48 15L30 15C31 13 31 11 32 9L46 9L46 4Z","清":"M4 6C7 8 10 10 12 12L15 8C13 6 9 4 7 3ZM2 19C4 21 8 23 10 25L13 21C11 19 7 17 4 16ZM3 45L7 47C10 43 12 37 15 31L11 28C8 34 5 41 3 45ZM22 34L39 34L39 37L22 37ZM22 30L22 27L39 27L39 30ZM28 2L28 6L16 6L16 9L28 9L28 12L17 12L17 15L28 15L28 18L14 18L14 21L48 21L48 18L33 18L33 15L44 15L44 12L33 12L33 9L46 9L46 6L33 6L33 2ZM18 24L18 48L22 48L22 41L39 41L39 43C39 44 39 44 38 44C38 44 35 44 33 44C33 45 34 47 34 48C38 48 40 48 42 47C43 47 44 46 44 43L44 24Z","版":"M5 3L5 23C5 30 4 39 1 46C2 46 4 48 5 48C8 43 9 37 9 30L15 30L15 48L19 48L19 26L9 26L9 23L9 20L22 20L22 15L18 15L18 2L14 2L14 15L9 15L9 3ZM42 20C41 25 39 30 37 33C35 30 34 25 33 20ZM24 5L24 22C24 29 24 39 20 46C21 46 23 48 24 49C28 41 29 31 29 22L29 20C30 27 32 33 35 37C32 41 29 43 26 44C27 45 28 47 29 48C32 47 35 44 37 41C40 44 42 47 45 48C46 47 47 45 48 45C45 43 42 41 40 38C44 32 46 25 47 17L44 16L43 16L29 16L29 9C35 8 42 7 48 6L45 2C40 3 31 4 24 5Z","牌":"M22 7L22 26L29 26C28 28 25 30 22 31C22 32 24 33 25 34L20 34L20 38L36 38L36 48L41 48L41 38L48 38L48 34L41 34L41 27L36 27L36 34L25 34C30 32 33 29 34 26L47 26L47 7L35 7L37 3L32 2C31 3 30 5 30 7ZM26 18L32 18C32 19 32 21 31 22L26 22ZM36 18L42 18L42 22L36 22C36 21 36 19 36 18ZM26 10L32 10L32 15L26 15ZM36 10L42 10L42 15L36 15ZM5 3L5 22C5 29 4 40 2 47C3 47 5 48 6 48C7 43 8 36 9 30L14 30L14 48L18 48L18 26L9 26L9 22L9 19L21 19L21 15L17 15L17 2L13 2L13 15L9 15L9 3Z","理":"M25 17L31 17L31 23L25 23ZM35 17L42 17L42 23L35 23ZM25 8L31 8L31 14L25 14ZM35 8L42 8L42 14L35 14ZM16 42L16 47L48 47L48 42L36 42L36 36L47 36L47 32L36 32L36 27L46 27L46 4L20 4L20 27L31 27L31 32L20 32L20 36L31 36L31 42ZM2 38L3 43C7 42 13 40 19 38L18 33L12 35L12 24L17 24L17 19L12 19L12 9L18 9L18 5L2 5L2 9L8 9L8 19L3 19L3 24L8 24L8 37C6 37 3 38 2 38Z","用":"M7 5L7 23C7 30 7 39 1 45C2 46 4 48 5 48C9 44 11 39 11 33L23 33L23 48L28 48L28 33L40 33L40 42C40 43 40 43 39 43C38 44 34 44 31 43C32 45 33 47 33 48C37 48 40 48 42 47C44 46 45 45 45 42L45 5ZM12 10L23 10L23 17L12 17ZM40 10L40 17L28 17L28 10ZM12 21L23 21L23 29L12 29C12 27 12 25 12 23ZM40 21L40 29L28 29L28 21Z","电":"M22 24L22 30L11 30L11 24ZM27 24L39 24L39 30L27 30ZM22 20L11 20L11 14L22 14ZM27 20L27 14L39 14L39 20ZM6 9L6 38L11 38L11 35L22 35L22 39C22 46 24 47 30 47C31 47 39 47 40 47C46 47 48 45 48 37C47 37 45 36 44 35C43 41 43 43 40 43C38 43 32 43 30 43C28 43 27 42 27 39L27 35L44 35L44 9L27 9L27 2L22 2L22 9Z","的":"M27 23C30 27 33 32 35 35L39 32C37 29 34 25 31 21ZM30 2C28 8 25 15 22 19L22 10L14 10C15 8 16 5 17 3L11 2C11 4 10 7 10 10L4 10L4 47L8 47L8 43L22 43L22 20C23 20 25 22 26 22C27 20 29 17 30 14L42 14C42 33 41 41 39 42C39 43 38 43 37 43C36 43 33 43 30 43C31 44 31 46 31 47C34 48 37 48 39 47C41 47 42 47 43 45C45 42 46 35 47 12C47 11 47 10 47 10L32 10C33 7 34 5 34 3ZM8 14L18 14L18 24L8 24ZM8 39L8 28L18 28L18 39Z","目":"M12 21L37 21L37 28L12 28ZM12 16L12 9L37 9L37 16ZM12 33L37 33L37 40L12 40ZM8 5L8 48L12 48L12 45L37 45L37 48L42 48L42 5Z","看":"M17 34L38 34L38 37L17 37ZM17 30L17 28L38 28L38 30ZM17 40L38 40L38 43L17 43ZM41 2C33 4 18 4 6 4C6 5 7 7 7 8C11 8 15 8 20 8L19 11L6 11L6 14L18 14C17 15 17 16 16 17L3 17L3 21L14 21C11 26 7 31 1 34C2 35 4 36 4 37C8 36 10 33 13 31L13 48L17 48L17 46L38 46L38 48L42 48L42 24L18 24C18 23 19 22 20 21L47 21L47 17L22 17L23 14L44 14L44 11L24 11L25 7C32 7 39 6 44 6Z","码":"M21 34L21 38L39 38L39 34ZM24 11C24 17 23 23 23 28L42 28C42 38 40 42 39 43C39 44 38 44 37 44C36 44 34 44 32 44C33 45 33 47 33 48C36 48 38 48 39 48C41 48 42 47 43 46C45 44 46 39 47 26C47 25 47 24 47 24L41 24C42 17 43 10 43 5L40 4L39 5L22 5L22 9L38 9C38 13 37 19 37 24L28 24C28 20 29 15 29 12ZM2 4L2 9L8 9C7 16 5 22 1 27C2 28 3 31 3 32C4 31 5 30 6 29L6 46L10 46L10 42L19 42L19 20L10 20C11 16 12 12 13 9L20 9L20 4ZM10 24L14 24L14 38L10 38Z","种":"M32 17L32 27L26 27L26 17ZM37 17L43 17L43 27L37 27ZM32 2L32 12L22 12L22 35L26 35L26 32L32 32L32 48L37 48L37 32L43 32L43 35L47 35L47 12L37 12L37 2ZM18 2C14 4 8 6 2 6C3 7 3 9 3 10C6 10 8 10 10 9L10 16L2 16L2 20L9 20C7 26 4 32 1 35C2 36 3 38 3 40C6 37 8 32 10 28L10 48L14 48L14 26C16 29 18 31 18 33L21 29C20 28 16 23 14 21L14 20L20 20L20 16L14 16L14 8C17 8 19 7 21 6Z","称":"M25 22C24 28 22 34 19 38C20 38 22 40 23 40C26 36 28 29 29 22ZM39 22C41 28 43 35 44 40L48 38C47 34 45 27 43 21ZM26 2C25 8 23 14 20 18L20 16L14 16L14 8C16 7 19 7 21 6L18 2C14 4 8 5 3 6C3 7 4 9 4 10C6 10 8 9 10 9L10 16L2 16L2 20L9 20C7 26 4 32 1 35C2 36 3 38 4 39C6 37 8 32 10 28L10 48L14 48L14 27C16 29 17 31 18 33L21 29C20 28 16 23 14 22L14 20L20 20C21 20 23 21 23 22C25 19 27 16 28 13L32 13L32 43C32 43 32 44 31 44C31 44 28 44 26 44C27 45 28 47 28 48C31 48 33 48 35 47C36 46 37 45 37 43L37 13L42 13C42 14 41 16 40 18L44 19C46 16 47 12 48 9L45 8L30 8C30 6 30 5 31 3Z","算":"M13 22L38 22L38 24L13 24ZM13 27L38 27L38 29L13 29ZM13 16L38 16L38 19L13 19ZM29 2C28 4 26 7 24 9C24 10 23 11 22 11C23 12 24 13 26 13L15 13L18 12C18 11 17 10 16 9L24 9L24 5L12 5C13 4 13 4 13 3L9 2C7 5 4 9 1 12C2 12 4 14 5 14C7 13 8 11 10 9L12 9C12 10 13 12 14 13L9 13L9 32L15 32L15 36L3 36L3 40L14 40C12 42 9 43 3 45C4 46 6 47 6 48C14 46 18 43 19 40L32 40L32 48L36 48L36 40L48 40L48 36L36 36L36 32L42 32L42 13L38 13L41 12C40 11 39 10 39 9L47 9L47 5L32 5C33 4 33 4 33 3ZM32 36L20 36L20 32L32 32ZM26 13C28 12 29 11 30 9L33 9C35 10 36 12 36 13Z","管":"M10 22L10 48L15 48L15 47L38 47L38 48L43 48L43 36L15 36L15 33L40 33L40 22ZM38 43L15 43L15 39L38 39ZM22 13C22 14 23 15 23 16L4 16L4 24L9 24L9 19L41 19L41 24L46 24L46 16L28 16C27 15 27 13 26 12ZM15 26L35 26L35 29L15 29ZM8 2C7 6 5 10 2 13C3 13 5 14 6 15C7 13 9 11 10 9L13 9C14 11 15 13 16 14L20 13C19 12 18 10 17 9L24 9L24 6L12 6C12 5 12 4 13 2ZM30 2C29 5 27 9 25 11C26 12 28 13 28 13C30 12 30 11 31 9L34 9C36 11 37 13 38 15L42 13C41 12 40 10 39 9L47 9L47 6L33 6C33 5 34 4 34 2Z","类":"M37 3C36 5 34 8 32 10L36 11C38 9 40 7 42 4ZM9 5C11 7 13 9 14 11L3 11L3 16L19 16C15 19 9 22 2 24C3 25 5 27 5 28C12 26 18 22 23 18L23 25L27 25L27 19C33 22 41 25 44 28L47 24C43 22 36 18 30 16L47 16L47 11L27 11L27 2L23 2L23 11L14 11L18 10C17 8 15 5 13 3ZM23 26C22 28 22 30 22 31L3 31L3 35L20 35C18 40 12 42 2 44C3 45 4 47 4 48C17 46 22 42 25 37C29 43 36 47 45 48C46 47 47 45 48 44C40 43 33 40 29 35L47 35L47 31L27 31C27 30 27 28 28 26Z","系":"M13 33C11 36 7 40 3 42C4 43 6 44 7 45C11 43 15 39 18 35ZM31 35C36 38 40 43 43 45L47 43C44 40 39 36 35 33ZM33 22C34 23 35 24 36 25L17 27C24 23 32 19 38 14L35 11C32 13 30 14 27 16L16 17C19 14 22 12 26 9C32 8 38 7 43 6L40 2C32 4 17 5 5 6C6 7 6 9 6 10C10 10 15 10 19 9C16 12 13 15 12 15C10 16 9 17 8 17C8 19 9 21 9 22C10 21 12 21 21 20C17 23 14 24 12 25C9 27 7 28 5 28C6 29 6 31 7 32C8 32 10 31 23 30L23 42C23 43 23 43 22 43C21 43 18 43 15 43C16 44 17 46 17 48C21 48 24 48 25 47C27 46 28 45 28 43L28 30L39 29C41 31 42 32 43 34L46 31C44 28 40 23 36 20Z","细":"M2 41L2 46C7 45 14 43 20 42L20 38C13 39 6 40 2 41ZM3 23C4 23 5 22 11 22C9 25 7 27 6 28C4 29 3 31 2 31C2 32 3 34 3 35C4 34 6 34 20 32C20 31 20 29 20 28L10 29C14 25 18 20 21 16L17 13C16 15 16 16 15 17L8 18C11 14 14 9 17 4L12 2C10 8 6 14 5 15C3 17 2 18 1 18C2 20 3 22 3 23ZM32 40L26 40L26 27L32 27ZM36 40L36 27L42 27L42 40ZM21 4L21 47L26 47L26 44L42 44L42 47L47 47L47 4ZM32 22L26 22L26 9L32 9ZM36 22L36 9L42 9L42 22Z","结":"M2 41L2 46C7 45 14 43 21 42L20 37C13 39 6 40 2 41ZM3 23C4 22 5 22 10 22C8 24 7 26 6 27C4 29 3 30 2 31C2 32 3 34 3 35C4 34 6 34 20 31C20 30 20 29 20 27L10 29C14 25 18 20 21 15L16 12C16 14 14 16 13 17L8 18C11 14 13 9 16 4L11 2C9 8 5 14 4 15C3 17 2 18 1 18C2 19 3 22 3 23ZM32 2L32 8L20 8L20 13L32 13L32 20L22 20L22 24L46 24L46 20L36 20L36 13L47 13L47 8L36 8L36 2ZM23 29L23 48L28 48L28 46L41 46L41 48L45 48L45 29ZM28 42L28 33L41 33L41 42Z","统":"M35 27L35 42C35 46 35 47 39 47C40 47 43 47 43 47C47 47 48 45 48 38C47 38 45 37 44 36C44 42 44 43 43 43C42 43 41 43 40 43C39 43 39 43 39 42L39 27ZM25 27C25 36 24 41 16 44C17 45 18 47 19 48C28 44 29 38 30 27ZM2 41L3 46C8 44 14 42 19 40L18 36C12 38 6 40 2 41ZM29 3C30 5 31 7 32 9L20 9L20 13L29 13C26 16 23 20 22 21C21 22 20 22 19 22C20 24 20 26 20 27C22 26 24 26 42 24C43 26 43 27 44 28L48 26C46 23 43 18 40 15L37 16C38 18 39 19 40 21L28 22C30 19 32 16 34 13L48 13L48 9L33 9L37 8C36 6 35 4 34 2ZM3 23C4 23 5 22 10 22C8 24 6 27 6 27C4 29 3 30 2 31C2 32 3 34 3 35C4 34 6 34 19 31C18 30 18 28 19 27L10 29C14 24 17 20 20 15L16 12C15 14 14 16 13 17L8 18C11 14 14 9 16 4L11 2C9 7 5 14 4 15C3 17 2 18 1 18C2 20 3 22 3 23Z","维":"M2 41L3 46C8 44 14 43 20 41L20 37C13 39 6 40 2 41ZM3 23C4 23 5 22 10 22C8 25 7 27 6 28C4 30 3 31 2 31C2 32 3 34 3 35C4 34 6 34 19 32C19 31 19 29 19 28L10 29C13 25 17 20 20 14L16 12C15 14 14 16 13 18L7 18C10 14 13 9 15 4L11 2C9 8 6 14 4 16C3 17 2 19 2 19C2 20 3 22 3 23ZM35 25L35 30L28 30L28 25ZM33 4C34 6 36 9 36 11L29 11C30 8 31 6 32 3L27 2C26 8 22 15 18 20C19 21 20 23 20 24C21 23 22 22 23 20L23 48L28 48L28 45L48 45L48 40L39 40L39 34L46 34L46 30L39 30L39 25L46 25L46 21L39 21L39 15L47 15L47 11L37 11L41 9C40 7 39 4 37 2ZM35 21L28 21L28 15L35 15ZM35 34L35 40L28 40L28 34Z","编":"M2 41L3 45C7 44 12 41 17 39L16 35C11 38 5 40 2 41ZM3 23C4 23 5 22 10 22C8 25 6 27 6 28C4 30 3 31 2 31C2 32 3 34 3 35C4 35 6 34 17 31C17 30 17 29 17 28L9 29C13 25 16 19 18 14L15 12C14 14 13 16 12 18L7 18C10 14 13 8 15 3L10 2C8 8 5 14 4 16C3 18 2 19 2 19C2 20 3 22 3 23ZM31 27L31 34L28 34L28 27ZM34 27L37 27L37 34L34 34ZM30 3C31 4 31 6 32 7L20 7L20 18C20 26 20 37 15 45C16 45 18 47 19 47C22 42 24 35 24 28L24 48L28 48L28 37L31 37L31 47L34 47L34 37L37 37L37 47L40 47L40 37L43 37L43 44C43 44 43 44 43 44C42 44 42 44 41 44C41 45 42 47 42 48C43 48 45 48 46 47C47 47 47 46 47 44L47 23L43 23L25 23L25 19L46 19L46 7L37 7C36 5 35 3 34 1ZM40 27L43 27L43 34L40 34ZM25 11L42 11L42 16L25 16Z","置":"M33 7L40 7L40 11L33 11ZM21 7L28 7L28 11L21 11ZM10 7L17 7L17 11L10 11ZM9 23L9 43L3 43L3 47L47 47L47 43L41 43L41 23L25 23L26 20L46 20L46 17L27 17L27 14L45 14L45 4L6 4L6 14L22 14L22 17L3 17L3 20L21 20L21 23ZM14 43L14 41L36 41L36 43ZM14 31L36 31L36 33L14 33ZM14 28L14 26L36 26L36 28ZM14 36L36 36L36 38L14 38Z","美":"M34 2C33 4 31 6 30 8L18 8L19 8C19 6 17 3 15 2L11 3C12 5 14 7 14 8L5 8L5 13L22 13L22 16L7 16L7 20L22 20L22 24L3 24L3 28L22 28C22 29 22 30 21 31L4 31L4 35L20 35C18 40 13 42 2 44C3 45 4 47 4 48C17 46 22 42 25 36C29 43 35 47 46 48C46 47 47 45 48 44C39 43 33 40 30 35L47 35L47 31L26 31C27 30 27 29 27 28L48 28L48 24L27 24L27 20L43 20L43 16L27 16L27 13L45 13L45 8L35 8C36 7 38 5 39 3Z","联":"M24 4C26 7 28 10 29 12L23 12L23 16L32 16L32 23L32 25L22 25L22 29L31 29C30 34 28 40 20 45C21 46 22 48 23 49C29 45 32 40 34 36C37 41 40 46 46 48C46 47 48 45 49 44C42 42 38 36 36 29L48 29L48 25L36 25L36 23L36 16L46 16L46 12L40 12C42 10 43 7 45 4L40 3C39 6 37 9 35 12L29 12L33 10C32 8 30 5 28 3ZM2 37L3 41L15 39L15 48L19 48L19 38L23 38L23 34L19 34L19 8L21 8L21 4L2 4L2 8L5 8L5 36ZM9 8L15 8L15 14L9 14ZM9 18L15 18L15 25L9 25ZM9 29L15 29L15 35L9 36Z","航":"M10 15C11 17 12 20 13 22L16 20C15 18 14 16 13 13ZM10 30C11 32 12 36 13 38L16 36C15 34 14 31 13 29ZM30 3C31 5 32 8 33 10L22 10L22 14L48 14L48 10L34 10L38 9C37 7 36 4 34 1ZM26 18L26 29C26 34 26 41 21 46C22 46 24 48 25 48C30 43 31 35 31 29L31 23L38 23L38 41C38 45 38 46 39 47C40 47 41 48 42 48C43 48 44 48 44 48C45 48 46 48 47 47C48 46 48 46 48 45C48 44 49 41 49 38C48 38 46 37 46 37C46 39 46 41 45 42C45 43 45 43 45 44C45 44 45 44 44 44C44 44 44 44 43 44C43 44 43 44 43 44C42 43 42 43 42 41L42 18ZM17 12L17 23L9 23L9 12ZM2 23L2 27L5 27C5 33 5 41 1 46C2 47 4 48 5 49C9 43 9 34 9 27L17 27L17 43C17 44 17 44 16 44C16 44 14 44 12 44C12 45 13 47 13 48C16 48 18 48 19 47C21 46 21 45 21 43L21 8L14 8L16 2L11 2C11 3 10 6 10 8L5 8L5 23Z","萍":"M3 44L6 48C9 44 12 40 15 36L12 33C9 37 6 41 3 44ZM4 16C7 18 11 20 13 22L16 18C14 16 10 14 7 13ZM2 26C5 27 9 30 10 31L13 28C11 26 8 24 5 23ZM17 22C19 25 22 29 22 31L26 29C26 27 23 23 21 20ZM42 20C40 23 38 27 37 30L41 32C42 29 44 25 46 21ZM32 2L32 6L18 6L18 2L14 2L14 6L2 6L2 10L14 10L14 13L18 13L18 10L32 10L32 13L36 13L36 10L48 10L48 6L36 6L36 2ZM16 32L16 36L29 36L29 48L34 48L34 36L48 36L48 32L34 32L34 19L46 19L46 15L17 15L17 19L29 19L29 32Z","表":"M12 48C14 47 16 47 30 42C29 41 29 39 29 38L17 41L17 32C20 30 22 28 25 25C28 36 35 43 45 47C46 45 48 44 49 43C44 41 40 39 36 36C40 34 43 32 46 29L42 27C40 29 37 31 34 33C32 31 30 28 29 25L47 25L47 21L27 21L27 17L43 17L43 13L27 13L27 10L45 10L45 6L27 6L27 2L22 2L22 6L5 6L5 10L22 10L22 13L8 13L8 17L22 17L22 21L3 21L3 25L19 25C14 29 7 33 1 34C2 35 4 37 5 38C7 37 10 36 12 35L12 40C12 42 11 43 10 44C11 45 12 47 12 48Z","规":"M24 4L24 31L28 31L28 8L41 8L41 31L46 31L46 4ZM10 2L10 10L3 10L3 14L10 14L10 18L10 21L2 21L2 26L10 26C9 32 7 40 2 44C3 45 4 47 5 48C9 44 12 38 13 33C15 35 18 39 19 41L22 37C21 36 16 30 14 28L14 26L21 26L21 21L14 21L14 18L14 14L21 14L21 10L14 10L14 2ZM32 12L32 21C32 29 31 38 18 45C19 45 20 47 21 48C28 45 32 40 34 35L34 42C34 46 35 47 39 47L43 47C47 47 48 45 48 37C47 37 46 36 44 36C44 42 44 43 43 43L40 43C38 43 38 43 38 42L38 29L36 29C36 26 37 24 37 21L37 12Z","计":"M6 6C9 8 13 11 14 13L18 10C16 8 12 5 9 2ZM2 17L2 22L10 22L10 39C10 41 8 42 7 43C8 44 9 46 10 48C10 46 12 45 22 38C21 37 21 35 20 34L15 38L15 17ZM31 2L31 18L18 18L18 23L31 23L31 48L36 48L36 23L48 23L48 18L36 18L36 2Z","设":"M6 5C8 8 12 11 13 13L17 10C15 8 11 5 9 3ZM2 17L2 22L9 22L9 39C9 41 7 43 6 43C7 44 8 46 8 47C9 46 11 45 20 38C19 37 19 35 18 34L13 38L13 17ZM24 4L24 9C24 13 23 16 17 19C18 20 19 22 20 23C27 20 28 14 28 9L28 8L36 8L36 15C36 19 37 21 41 21C42 21 44 21 45 21C46 21 47 21 48 20C48 19 47 18 47 16C47 17 46 17 45 17C44 17 42 17 42 17C41 17 41 16 41 15L41 4ZM39 28C38 32 35 35 32 37C29 34 27 32 25 28ZM19 24L19 28L22 28L21 29C23 33 25 36 29 40C25 42 21 43 16 44C17 45 18 47 19 48C24 47 28 45 32 42C36 45 40 47 46 48C46 47 47 45 48 44C44 43 40 42 36 40C40 36 43 31 45 25L42 24Z","试":"M6 6C8 8 11 11 13 13L16 10C15 8 11 5 9 3ZM39 4C41 6 43 10 44 12L48 9C47 7 44 4 42 2ZM2 17L2 22L9 22L9 39C9 41 7 42 6 43C7 44 8 46 9 47C10 46 11 45 20 39C19 38 19 37 19 35L13 39L13 17ZM33 2L34 12L17 12L17 16L34 16C35 36 37 48 43 48C45 48 47 46 49 37C48 37 46 35 45 34C45 39 44 42 43 42C41 42 39 31 38 16L48 16L48 12L38 12C38 9 38 5 38 2ZM18 41L19 45C24 44 29 42 34 41L34 36L28 38L28 27L32 27L32 23L19 23L19 27L24 27L24 39Z","话":"M4 6C7 8 10 11 12 13L15 10C14 8 10 5 8 3ZM21 29L21 48L25 48L25 46L41 46L41 48L46 48L46 29L35 29L35 22L48 22L48 17L35 17L35 8C39 8 43 7 46 6L43 2C37 4 27 5 18 6C19 7 19 9 20 10C23 10 27 9 31 9L31 17L18 17L18 22L31 22L31 29ZM25 42L25 34L41 34L41 42ZM2 17L2 22L8 22L8 38C8 41 7 43 6 43C7 44 8 46 8 47C9 46 11 45 20 38C19 37 18 35 18 33L13 37L13 17Z","询":"M5 6C7 8 11 11 12 13L15 10C14 8 11 5 8 3ZM2 17L2 22L8 22L8 38C8 40 7 42 6 43C7 44 8 46 8 47C9 46 11 44 19 38C19 37 18 35 18 34L13 37L13 17ZM25 2C23 8 19 14 15 18C16 19 18 20 19 21L21 19L21 41L25 41L25 38L37 38L37 18L22 18C23 16 24 15 25 13L42 13C42 33 41 41 40 43C39 43 39 44 38 44C36 44 34 44 31 43C32 45 32 47 32 48C35 48 38 48 40 48C41 48 43 47 44 45C46 43 46 35 47 11C47 11 47 9 47 9L27 9C28 7 29 5 30 3ZM33 30L33 34L25 34L25 30ZM33 26L25 26L25 22L33 22Z","详":"M5 6C8 8 11 11 13 14L16 10C14 8 11 5 8 3ZM2 17L2 22L9 22L9 39C9 42 8 43 7 44C7 45 9 47 9 48C10 46 11 45 20 39C19 38 19 37 19 36L18 35L14 38L14 17ZM41 2C40 5 38 8 37 11L27 11L31 10C30 8 28 4 27 2L23 4C24 6 26 9 26 11L20 11L20 16L31 16L31 22L22 22L22 26L31 26L31 32L19 32L19 36L31 36L31 48L36 48L36 36L48 36L48 32L36 32L36 26L45 26L45 22L36 22L36 16L47 16L47 11L42 11C43 9 44 6 46 3Z","路":"M8 8L17 8L17 16L8 16ZM2 41L2 46C8 45 15 43 22 41L22 37L16 38L16 30L21 30C22 31 22 32 23 32L25 32L25 48L29 48L29 46L40 46L40 48L45 48L45 32L46 32C47 31 48 29 49 28C45 26 41 24 38 21C41 18 44 13 45 8L42 7L41 7L33 7C33 5 34 4 34 3L30 2C28 8 25 13 21 17L21 4L4 4L4 20L11 20L11 39L8 40L8 24L4 24L4 41ZM29 42L29 34L40 34L40 42ZM39 11C38 13 37 16 35 18C33 16 32 14 30 12L31 11ZM28 30C30 28 33 27 35 24C37 26 39 28 42 30ZM32 21C29 24 25 27 21 28L21 26L16 26L16 20L21 20L21 17C22 18 24 19 24 20C26 19 27 17 28 15C29 17 30 19 32 21Z","车":"M8 28C9 28 11 28 14 28L25 28L25 34L3 34L3 39L25 39L25 48L30 48L30 39L47 39L47 34L30 34L30 28L43 28L43 23L30 23L30 16L25 16L25 23L13 23C15 20 17 17 19 14L46 14L46 9L22 9C22 7 23 5 24 3L19 1C18 4 17 7 16 9L4 9L4 14L14 14C12 16 11 19 10 20C9 22 8 23 7 24C7 25 8 28 8 28Z","软":"M29 2C28 10 26 17 23 21C24 22 26 23 27 24C28 21 30 18 31 14L43 14C42 17 42 20 41 23L45 24C46 20 47 15 48 10L45 9L32 9C33 7 33 5 34 2ZM33 18L33 20C33 27 32 37 22 45C23 46 24 47 25 48C31 44 34 39 35 34C38 40 41 45 45 48C46 47 48 45 49 44C42 41 39 34 37 25C37 24 37 22 37 21L37 18ZM4 28C5 27 7 27 8 27L14 27L14 34C9 34 5 35 2 35L3 40L14 38L14 48L18 48L18 38L24 36L24 32L18 33L18 27L24 27L24 23L18 23L18 16L14 16L14 23L9 23C10 20 12 16 13 12L24 12L24 8L15 8L16 3L11 2C11 4 11 6 10 8L2 8L2 12L9 12C8 16 6 19 6 20C5 22 4 24 3 24C4 25 4 27 4 28Z","退":"M3 6C6 9 9 12 11 14L15 12C13 9 10 6 7 4ZM38 15L38 19L24 19L24 15ZM38 12L24 12L24 8L38 8ZM19 40C20 39 22 39 32 36C32 35 32 33 32 32L24 34L24 23L43 23C41 25 38 26 36 28C35 27 33 25 31 24L28 26C33 30 40 36 43 40L46 37C44 35 42 33 39 30C42 29 45 27 47 25L43 23L43 4L19 4L19 32C19 34 18 36 17 36C18 37 19 39 19 40ZM13 20L2 20L2 24L9 24L9 39C7 40 4 41 2 44L5 48C7 45 10 42 12 42C13 42 14 43 16 45C20 46 24 47 30 47C35 47 44 47 47 46C47 45 48 43 48 42C44 42 36 43 30 43C25 43 21 42 17 41C16 40 14 39 13 38Z","郑":"M6 4C8 6 10 9 10 11L4 11L4 16L14 16L14 19C14 20 14 22 14 24L2 24L2 28L13 28C12 34 9 40 2 45C3 46 5 47 6 48C11 44 14 40 16 35C19 38 23 42 24 45L28 42C26 39 21 34 17 31L18 28L29 28L29 24L18 24C18 22 19 20 19 19L19 16L28 16L28 11L22 11C24 9 25 6 26 3L21 2C21 5 19 9 18 11L11 11L15 9C14 7 12 4 10 2ZM30 4L30 48L35 48L35 9L42 9C41 13 39 18 37 22C42 26 43 30 43 33C43 35 43 36 42 36C41 37 41 37 40 37C39 37 38 37 36 37C37 38 38 40 38 42C39 42 41 42 42 42C43 41 44 41 45 40C47 39 48 37 48 33C48 30 47 26 42 21C44 17 47 11 49 6L45 4L44 4Z","配":"M27 4L27 9L42 9L42 20L28 20L28 41C28 46 29 48 34 48C35 48 41 48 42 48C47 48 48 45 49 37C47 37 45 36 44 35C44 42 44 43 42 43C40 43 36 43 35 43C33 43 32 43 32 41L32 24L42 24L42 27L47 27L47 4ZM7 36L20 36L20 41L7 41ZM7 33L7 29C8 29 9 30 9 30C12 28 13 24 13 21L13 17L15 17L15 26C15 28 16 29 18 29C18 29 19 29 20 29L20 33ZM3 4L3 8L10 8L10 13L4 13L4 48L7 48L7 45L20 45L20 47L24 47L24 13L19 13L19 8L25 8L25 4ZM13 13L13 8L15 8L15 13ZM7 29L7 17L10 17L10 21C10 23 10 26 7 29ZM17 17L20 17L20 26C20 26 20 26 19 26C19 26 18 26 18 26C17 26 17 26 17 26Z","量":"M13 11L36 11L36 13L13 13ZM13 6L36 6L36 8L13 8ZM9 3L9 16L41 16L41 3ZM2 18L2 21L48 21L48 18ZM12 30L23 30L23 33L12 33ZM27 30L38 30L38 33L27 33ZM12 26L23 26L23 28L12 28ZM27 26L38 26L38 28L27 28ZM2 43L2 47L48 47L48 43L27 43L27 41L44 41L44 38L27 38L27 36L43 36L43 23L8 23L8 36L23 36L23 38L7 38L7 41L23 41L23 43Z","金":"M10 33C11 36 13 40 14 42L18 41C17 38 15 34 13 32ZM36 32C35 35 33 38 31 41L35 42C37 40 39 37 41 34ZM25 1C20 9 11 14 1 17C2 18 4 20 4 22C7 21 9 20 12 18L12 21L22 21L22 27L6 27L6 31L22 31L22 43L3 43L3 47L47 47L47 43L27 43L27 31L44 31L44 27L27 27L27 21L38 21L38 18C41 19 43 20 46 21C46 20 48 18 49 17C41 15 33 10 28 5L29 3ZM36 17L15 17C19 14 22 12 25 8C28 11 32 14 36 17Z","除":"M23 33C22 36 19 40 17 43C18 43 19 45 20 45C23 42 26 38 27 34ZM38 34C41 38 44 42 45 45L49 43C47 40 44 36 42 33ZM4 4L4 48L8 48L8 8L13 8C12 11 11 16 10 19C13 23 14 26 14 29C14 30 13 31 13 32C12 32 12 32 11 32C10 32 10 32 9 32C9 34 10 35 10 36C11 36 12 36 13 36C14 36 15 36 16 35C17 34 18 32 18 29C18 26 17 23 14 18C15 15 17 10 18 5L15 4ZM33 1C29 7 23 13 17 16C18 17 19 18 20 20C21 19 22 18 23 18L23 21L31 21L31 26L19 26L19 31L31 31L31 43C31 44 31 44 30 44C30 44 27 44 25 44C25 45 26 47 26 48C30 48 32 48 34 47C35 47 36 45 36 43L36 31L48 31L48 26L36 26L36 21L43 21L43 17L46 19C46 18 48 16 49 15C45 13 40 10 36 5L37 3ZM24 17C27 15 30 12 33 8C36 12 40 15 43 17Z","项":"M30 19L30 30C30 35 29 41 16 45C16 45 18 47 18 48C33 44 35 36 35 30L35 19ZM34 40C38 42 43 46 45 48L48 45C46 43 41 39 37 37ZM1 34L2 39C7 38 13 36 19 33L19 29L13 31L13 12L18 12L18 7L2 7L2 12L8 12L8 32ZM21 13L21 36L25 36L25 17L40 17L40 36L45 36L45 13L33 13C34 11 35 10 36 8L48 8L48 4L19 4L19 8L30 8C30 10 29 11 28 13Z","额":"M34 20C34 35 34 41 23 45C23 46 25 47 25 48C37 44 38 36 38 20ZM37 40C40 43 44 46 46 48L49 45C47 43 43 40 39 37ZM26 14L26 37L30 37L30 17L42 17L42 37L46 37L46 14L37 14C38 12 38 10 39 9L48 9L48 5L26 5L26 9L35 9C34 10 33 12 33 14ZM10 3C11 4 12 5 12 7L3 7L3 15L7 15L7 10L21 10L21 15L25 15L25 7L17 7C16 5 15 3 15 2ZM7 24L10 25C8 27 5 28 2 29C2 30 3 32 3 34L6 33L6 48L10 48L10 46L18 46L18 48L22 48L22 32L6 32C9 31 12 30 15 28C18 29 20 31 22 32L26 29C24 28 21 26 18 25C20 22 22 20 24 17L21 15L20 15L13 15C14 14 14 13 14 12L10 12C9 15 6 19 2 21C2 22 4 23 4 24C7 23 9 21 10 19L18 19C17 20 15 22 14 23L10 21ZM10 43L10 36L18 36L18 43Z","：":"M12 20C15 20 17 18 17 16C17 13 15 12 12 12C10 12 8 13 8 16C8 18 10 20 12 20ZM12 44C15 44 17 43 17 40C17 38 15 36 12 36C10 36 8 38 8 40C8 43 10 44 12 44Z","￥":"M22 44L28 44L28 36L38 36L38 33L28 33L28 29L38 29L38 26L29 26L41 8L35 8L29 17C28 21 27 22 25 25C23 22 23 21 21 17L16 8L9 8L21 26L12 26L12 29L22 29L22 33L12 33L12 36L22 36Z"};
var GB={"中":"M22 2L22 10L4 10L4 36L10 36L10 33L22 33L22 48L28 48L28 33L39 33L39 35L46 35L46 10L28 10L28 2ZM10 27L10 16L22 16L22 27ZM39 27L28 27L28 16L39 16Z","修":"M35 25C32 27 27 29 23 30C24 31 25 32 26 33C31 32 36 30 39 26ZM39 29C36 33 30 35 23 37C24 38 26 39 26 40C33 39 40 36 44 31ZM43 35C39 40 30 42 21 44C22 45 23 47 24 48C34 47 43 43 48 37ZM15 16L15 40L20 40L20 24C21 25 21 26 22 27C26 26 31 24 34 22C38 24 41 26 46 27C47 25 48 23 49 22C45 21 42 20 39 19C42 16 45 12 47 8L43 6L42 7L32 7C32 5 33 4 33 3L28 2C26 7 23 11 19 14C20 15 22 17 23 18C24 17 25 16 26 15C27 16 29 18 30 19C27 20 24 22 20 22L20 16ZM29 11L39 11C38 13 36 15 34 16C32 15 31 13 29 11ZM11 2C8 9 5 16 1 21C2 23 3 26 4 28C5 26 6 25 7 24L7 48L12 48L12 13C14 10 15 7 16 3Z","出":"M4 27L4 46L39 46L39 48L46 48L46 27L39 27L39 40L28 40L28 24L44 24L44 6L37 6L37 18L28 18L28 2L22 2L22 18L13 18L13 6L7 6L7 24L22 24L22 40L11 40L11 27Z","助":"M1 37L2 44L24 38C23 40 21 42 18 44C20 45 22 47 22 48C32 42 35 31 36 18L41 18C41 34 40 40 39 42C39 42 38 43 37 43C36 43 34 42 32 42C33 44 33 46 33 48C36 48 38 48 40 48C42 48 43 47 44 45C46 43 46 36 47 15C47 14 47 12 47 12L36 12C36 9 36 5 36 2L30 2L30 12L24 12L24 18L30 18C29 26 28 32 25 37L24 33L22 33L22 4L5 4L5 37ZM10 36L10 30L17 30L17 34ZM10 19L17 19L17 24L10 24ZM10 14L10 9L17 9L17 14Z","客":"M19 19L31 19C29 20 27 22 25 23C23 22 21 20 19 19ZM20 2L22 6L4 6L4 17L9 17L9 11L19 11C16 15 12 19 5 21C6 22 8 24 9 26C11 25 13 23 15 22C16 24 18 25 19 26C14 28 8 30 1 31C2 32 4 35 4 36C6 36 9 35 11 35L11 48L17 48L17 47L34 47L34 48L40 48L40 34C41 35 43 35 45 35C46 34 47 31 49 30C42 29 36 28 31 26C35 23 38 20 40 16L36 14L35 14L24 14L25 12L20 11L40 11L40 17L47 17L47 6L29 6C28 4 27 2 26 1ZM25 29C28 31 30 32 34 33L17 33C20 32 22 31 25 29ZM17 42L17 38L34 38L34 42Z","帮":"M22 27L22 30L10 30C14 29 16 26 18 23L27 23L27 19L18 19L18 16L25 16L25 12L18 12L18 10L27 10L27 5L18 5L18 2L12 2L12 5L3 5L3 10L12 10L12 12L4 12L4 16L12 16L12 19L2 19L2 23L10 23C9 25 6 27 2 28C4 29 6 31 7 32L7 46L13 46L13 36L22 36L22 48L28 48L28 36L38 36L38 40C38 41 38 41 37 41C36 41 33 41 31 41C32 42 32 44 33 46C36 46 39 46 41 45C43 44 44 43 44 40L44 30L28 30L28 27ZM28 4L28 29L34 29L34 9L40 9C39 10 38 12 36 14C40 16 42 18 42 20C42 21 41 21 40 22C40 22 39 22 39 22C37 22 36 22 34 22C35 23 36 25 36 27C38 27 40 27 42 27C43 27 44 26 45 26C47 25 48 23 48 21C48 18 46 16 43 13C44 11 46 8 48 6L44 3L43 4Z","待":"M20 35C22 37 24 41 25 44L30 41C29 38 27 35 25 32ZM12 2C10 5 5 9 1 11C2 13 4 15 4 16C9 13 14 8 17 4ZM13 13C10 17 5 22 1 26C2 27 3 30 4 32C5 30 7 29 8 28L8 48L14 48L14 21C15 20 16 19 16 18L16 22L36 22L36 26L17 26L17 32L36 32L36 42C36 43 36 43 35 43C34 43 32 43 29 43C30 44 31 47 31 48C35 48 38 48 40 48C42 47 42 45 42 42L42 32L48 32L48 26L42 26L42 22L49 22L49 17L35 17L35 13L46 13L46 7L35 7L35 2L29 2L29 7L19 7L19 13L29 13L29 17L17 17L18 15Z","心":"M15 16L15 39C15 46 17 48 23 48C24 48 30 48 31 48C38 48 39 44 40 35C38 35 36 34 34 32C34 40 34 42 31 42C30 42 25 42 24 42C21 42 21 42 21 39L21 16ZM6 19C5 26 4 33 2 38L8 41C10 35 11 26 12 20ZM37 19C40 25 42 33 43 38L49 36C48 31 45 23 42 17ZM16 6C21 10 27 14 30 17L34 13C31 10 25 5 20 2Z","户":"M14 15L37 15L37 22L14 22L14 20ZM21 3C22 5 23 7 23 9L7 9L7 20C7 28 7 38 1 45C3 46 5 48 7 49C11 43 13 35 13 28L37 28L37 31L43 31L43 9L27 9L30 8C29 6 28 3 27 1Z","报":"M27 26C28 31 30 35 33 39C31 41 29 42 26 44L26 26ZM32 26L40 26C40 29 38 32 37 34C35 32 34 29 32 26ZM20 3L20 48L26 48L26 45C28 46 29 48 29 49C32 47 35 45 37 43C39 45 42 47 45 48C46 47 47 44 49 43C46 42 43 40 41 38C44 34 46 28 47 22L43 21L42 21L26 21L26 9L40 9C39 12 39 13 39 14C38 14 38 14 37 14C36 14 33 14 30 14C31 15 32 17 32 19C35 19 38 19 39 19C41 19 43 18 44 17C45 16 46 13 46 6C46 5 46 3 46 3ZM8 2L8 11L2 11L2 17L8 17L8 25C6 26 3 26 1 27L2 33L8 32L8 42C8 43 8 43 7 43C6 43 4 43 1 43C2 44 3 47 3 48C7 48 10 48 12 47C14 46 14 45 14 42L14 30L20 29L19 23L14 24L14 17L19 17L19 11L14 11L14 2Z","接":"M7 2L7 11L2 11L2 16L7 16L7 25C5 26 3 27 1 27L2 33L7 31L7 42C7 42 7 43 6 43C6 43 4 43 2 43C3 44 4 47 4 48C7 48 9 48 10 47C12 46 12 45 12 42L12 30L17 28L16 23L12 24L12 16L17 16L17 11L12 11L12 2ZM27 11L37 11C36 13 35 16 34 18L27 18L30 16C30 15 29 13 27 11ZM28 3C29 4 29 5 30 6L19 6L19 11L26 11L22 12C23 14 24 16 25 18L18 18L18 23L28 23C28 24 27 26 26 27L17 27L17 32L23 32C22 34 21 36 19 38C22 38 25 40 28 41C25 42 21 43 16 43C17 45 18 47 18 48C25 47 31 46 35 44C38 45 42 47 44 49L47 44C45 43 42 41 39 40C41 38 42 35 43 32L49 32L49 27L32 27C33 26 33 25 34 23L30 23L48 23L48 18L40 18C41 16 42 14 43 12L39 11L47 11L47 6L36 6C35 5 34 3 34 2ZM37 32C36 34 35 36 34 38C32 37 30 36 27 35L29 32Z","汽":"M4 7C7 8 11 10 13 12L16 7C14 6 10 4 8 2ZM1 20C4 22 8 24 10 25L13 20C11 19 7 17 4 16ZM3 44L8 48C11 43 14 37 16 32L12 28C9 34 5 40 3 44ZM22 1C21 7 17 12 14 15C15 16 17 18 19 19C20 18 21 16 22 15L22 19L44 19L44 14L22 14L24 12L48 12L48 7L27 7C27 6 28 4 28 3ZM17 22L17 27L37 27C37 40 38 49 44 49C48 49 49 46 49 40C48 39 47 38 46 36C46 40 45 43 45 43C43 43 43 34 43 22Z","版":"M4 3L4 22C4 29 4 39 1 45C2 46 4 48 5 49C8 44 9 37 10 31L14 31L14 48L20 48L20 26L10 26L10 22L10 20L22 20L22 15L19 15L19 2L13 2L13 15L10 15L10 3ZM41 21C40 25 39 29 38 32C36 28 35 25 34 21ZM24 4L24 21C24 29 23 39 20 46C21 46 23 48 24 49C25 48 26 46 27 44C28 45 29 47 30 49C33 47 35 45 38 42C40 45 42 47 45 49C46 47 47 45 49 44C46 42 43 40 41 37C44 32 46 25 47 16L44 15L43 15L30 15L30 9C36 9 43 8 48 7L45 2C39 3 31 4 24 4ZM34 37C32 40 30 42 27 43C29 37 29 30 30 23C31 28 32 33 34 37Z","理":"M26 18L31 18L31 22L26 22ZM36 18L41 18L41 22L36 22ZM26 9L31 9L31 13L26 13ZM36 9L41 9L41 13L36 13ZM16 41L16 47L49 47L49 41L36 41L36 37L47 37L47 31L36 31L36 27L47 27L47 4L20 4L20 27L30 27L30 31L20 31L20 37L30 37L30 41ZM1 38L3 44C7 42 13 40 19 38L18 33L13 34L13 24L18 24L18 19L13 19L13 10L18 10L18 4L2 4L2 10L7 10L7 19L2 19L2 24L7 24L7 36Z","用":"M7 5L7 23C7 30 7 39 1 45C2 46 5 48 6 49C10 45 11 39 12 34L22 34L22 48L29 48L29 34L39 34L39 41C39 42 39 43 38 43C37 43 34 43 31 42C32 44 32 47 33 48C37 48 40 48 42 47C44 46 45 45 45 41L45 5ZM13 11L22 11L22 16L13 16ZM39 11L39 16L29 16L29 11ZM13 22L22 22L22 28L13 28C13 26 13 24 13 23ZM39 22L39 28L29 28L29 22Z","算":"M14 22L37 22L37 24L14 24ZM14 27L37 27L37 29L14 29ZM14 17L37 17L37 19L14 19ZM29 1C28 4 26 7 24 9L24 5L13 5L14 3L9 1C7 5 4 9 1 11C2 12 5 13 6 14C7 13 9 11 10 10L11 10C12 11 13 12 13 13L8 13L8 33L14 33L14 36L2 36L2 40L12 40C11 42 8 43 3 44C4 45 6 47 7 48C15 46 18 44 20 40L31 40L31 48L37 48L37 40L48 40L48 36L37 36L37 33L43 33L43 13L38 13L42 12C41 11 41 10 40 10L48 10L48 5L34 5C34 4 34 3 35 2ZM31 36L20 36L20 33L31 33ZM26 13L15 13L19 12C18 11 18 10 17 10L24 10C23 10 22 10 22 11C23 11 25 12 26 13ZM28 13C29 12 30 11 31 10L34 10C35 11 36 12 36 13Z","管":"M10 22L10 49L16 49L16 47L37 47L37 48L43 48L43 36L16 36L16 33L40 33L40 22ZM37 43L16 43L16 40L37 40ZM21 13C22 14 22 14 22 15L4 15L4 24L9 24L9 20L40 20L40 24L47 24L47 15L28 15C28 14 27 13 26 12ZM16 26L34 26L34 29L16 29ZM8 1C7 5 4 10 1 12C3 13 5 14 7 15C8 14 10 11 11 9L13 9C14 11 15 13 16 15L21 13C20 12 19 10 19 9L25 9L25 5L13 5C13 4 14 3 14 2ZM30 1C29 5 27 8 24 11C26 11 28 12 29 13C30 12 31 11 32 9L34 9C36 11 37 13 38 15L43 13C42 12 42 10 41 9L48 9L48 5L34 5C35 4 35 3 35 2Z","系":"M12 33C10 36 6 40 2 42C3 43 6 45 7 46C11 43 15 39 18 35ZM31 36C35 39 40 43 42 46L47 42C45 40 40 36 36 33ZM32 22C33 23 34 24 35 25L20 26C26 23 33 19 39 14L34 10C32 12 30 14 27 16L17 16C20 14 23 12 26 9C32 8 38 8 44 6L39 1C31 3 17 5 5 5C5 6 6 9 6 10C10 10 14 10 17 10C15 12 12 14 11 15C10 16 8 16 7 17C8 18 9 21 9 22C10 21 12 21 20 21C16 22 14 24 12 25C9 26 7 27 5 27C6 29 7 32 7 33C8 32 11 32 22 31L22 42C22 42 22 42 21 43C20 43 17 43 15 42C16 44 16 47 17 48C20 48 23 48 26 47C28 46 28 45 28 42L28 30L39 29C40 31 41 33 42 34L46 31C44 28 40 23 37 20Z","结":"M1 40L2 46C8 45 15 44 21 43L21 37C14 38 6 40 1 40ZM3 23C4 23 5 22 9 22C8 24 6 26 6 27C4 28 3 29 1 30C2 31 3 34 3 36C5 35 7 34 21 32C20 30 20 28 20 27L12 28C15 24 19 19 21 15L16 11C15 13 14 15 13 16L9 17C12 13 14 8 16 4L10 1C8 7 5 13 4 14C3 16 2 17 1 17C2 19 3 22 3 23ZM31 2L31 8L21 8L21 13L31 13L31 19L22 19L22 25L47 25L47 19L37 19L37 13L48 13L48 8L37 8L37 2ZM23 28L23 48L29 48L29 46L40 46L40 48L46 48L46 28ZM29 41L29 34L40 34L40 41Z","统":"M34 27L34 41C34 46 35 48 40 48C40 48 42 48 43 48C47 48 48 45 49 38C47 37 45 36 44 35C43 42 43 43 42 43C42 43 41 43 41 43C40 43 40 42 40 41L40 27ZM25 27C24 35 24 41 16 44C17 45 19 47 20 49C29 45 30 37 30 27ZM2 41L3 46C8 45 14 42 20 40L19 35C12 37 6 39 2 41ZM29 3C30 4 30 6 31 8L20 8L20 13L28 13C26 16 23 19 22 20C21 21 20 22 19 22C19 23 20 26 20 28C22 27 25 26 42 25C42 26 43 27 43 28L48 26C47 22 44 18 41 14L37 17C37 18 38 19 39 20L29 21C31 19 33 16 35 13L48 13L48 8L34 8L37 7C37 6 36 3 35 1ZM3 23C4 23 5 23 9 22C7 24 6 26 5 27C4 29 3 30 1 30C2 32 3 34 3 36C5 35 7 34 19 31C19 30 19 28 19 26L12 27C15 24 18 19 20 15L15 12C14 13 13 15 12 17L9 17C12 13 14 8 16 4L10 1C8 7 5 13 4 14C3 16 2 17 1 17C2 19 3 22 3 23Z","维":"M2 41L3 46C8 45 14 43 21 42L20 37C13 38 6 40 2 41ZM3 23C4 23 5 23 9 22C8 25 6 26 6 27C4 29 3 30 2 31C2 32 3 34 3 36C5 35 7 34 19 32C19 31 19 28 19 27L11 28C14 24 18 19 20 14L16 11C15 13 14 15 12 17L8 18C11 13 14 8 16 4L10 1C8 7 5 14 4 15C3 17 2 18 1 18C2 20 3 22 3 23ZM35 26L35 30L28 30L28 26ZM33 4C34 6 36 8 36 10L30 10C31 8 32 6 33 3L27 2C25 7 22 15 18 20C19 21 20 24 21 25C22 24 22 24 23 23L23 49L28 49L28 45L48 45L48 40L40 40L40 35L47 35L47 30L40 30L40 26L46 26L46 20L40 20L40 16L48 16L48 10L38 10L42 9C41 7 40 4 38 2ZM35 20L28 20L28 16L35 16ZM35 35L35 40L28 40L28 35Z","置":"M33 7L39 7L39 10L33 10ZM22 7L28 7L28 10L22 10ZM11 7L17 7L17 10L11 10ZM8 23L8 43L3 43L3 47L48 47L48 43L42 43L42 23L26 23L27 21L46 21L46 16L27 16L28 14L45 14L45 3L5 3L5 14L22 14L21 16L3 16L3 21L21 21L21 23ZM14 43L14 41L36 41L36 43ZM14 31L36 31L36 33L14 33ZM14 28L14 26L36 26L36 28ZM14 36L36 36L36 38L14 38Z","美":"M33 1C32 3 31 6 29 8L18 8L20 7C19 5 18 3 16 1L11 3C12 5 13 6 14 8L5 8L5 13L22 13L22 16L7 16L7 21L22 21L22 23L2 23L2 28L21 28L21 31L4 31L4 36L18 36C16 40 11 42 1 43C3 44 4 47 4 48C17 46 22 43 25 37C29 44 35 47 45 48C46 47 48 44 49 43C40 42 35 40 31 36L47 36L47 31L27 31L27 28L48 28L48 23L28 23L28 21L43 21L43 16L28 16L28 13L45 13L45 8L36 8C37 6 38 5 40 3Z","萍":"M4 17C7 18 10 20 12 22L16 18C14 16 10 14 7 13ZM2 26C5 28 8 30 10 32L14 27C12 26 8 24 5 22ZM41 20C40 24 38 28 37 30L40 32L35 32L35 20L46 20L46 14L18 14L18 20L29 20L29 32L22 32L27 29C26 27 24 23 22 21L17 23C19 26 21 29 22 32L16 32L16 36L12 32C9 36 5 41 2 43L7 48C10 44 13 40 16 37L29 37L29 48L35 48L35 37L48 37L48 32L42 32C43 29 45 26 47 22ZM31 2L31 5L19 5L19 2L13 2L13 5L2 5L2 10L13 10L13 13L19 13L19 10L31 10L31 13L37 13L37 10L48 10L48 5L37 5L37 2Z","表":"M12 48C13 48 16 47 30 42C30 41 29 39 29 37L18 40L18 32C20 30 23 28 24 26C28 36 34 44 45 47C46 46 48 43 49 42C44 41 41 39 38 36C40 34 44 32 46 30L42 26C40 28 37 30 34 32C32 30 31 28 30 26L47 26L47 20L28 20L28 18L43 18L43 13L28 13L28 10L45 10L45 5L28 5L28 2L22 2L22 5L5 5L5 10L22 10L22 13L7 13L7 18L22 18L22 20L3 20L3 26L17 26C13 29 7 32 1 34C2 35 4 37 5 39C7 38 10 37 12 36L12 39C12 41 10 43 9 43C10 44 11 47 12 48Z","计":"M6 6C9 8 12 12 14 14L18 9C16 7 12 4 10 2ZM2 17L2 23L9 23L9 38C9 40 8 42 6 43C7 44 9 47 9 48C10 47 12 46 22 38C22 37 21 34 20 33L15 36L15 17ZM30 2L30 17L18 17L18 24L30 24L30 48L37 48L37 24L48 24L48 17L37 17L37 2Z","设":"M5 6C8 8 11 12 13 14L17 10C15 8 12 4 9 2ZM2 17L2 23L8 23L8 38C8 40 6 42 5 43C6 44 8 46 8 48C9 47 11 45 20 37C19 36 18 34 18 32L14 36L14 17ZM23 3L23 9C23 12 23 16 16 18C18 19 20 22 20 23C28 19 29 14 29 9L36 9L36 14C36 19 37 21 42 21C42 21 44 21 45 21C46 21 47 21 48 21C48 19 48 17 48 16C47 16 46 16 45 16C44 16 43 16 42 16C42 16 41 16 41 14L41 3ZM38 29C37 32 35 34 32 36C30 34 28 32 26 29ZM19 23L19 29L23 29L21 30C22 33 25 36 28 39C24 41 20 42 16 43C17 44 18 47 18 48C23 47 28 46 32 43C36 46 40 47 45 49C46 47 47 44 49 43C44 42 40 41 37 39C41 36 44 31 46 25L42 23L41 23Z","试":"M5 6C8 8 11 12 13 14L17 10C15 8 11 4 9 2ZM19 23L19 28L23 28L23 39L20 40C19 38 19 36 18 34L14 37L14 17L2 17L2 23L8 23L8 38C8 40 7 42 6 42C7 44 8 46 8 48C9 47 11 46 18 41L20 46C24 44 29 43 34 41L34 36L29 37L29 28L32 28L32 23ZM33 2L33 11L18 11L18 17L33 17C34 36 36 48 43 48C45 48 48 46 49 37C48 36 45 34 44 33C44 38 44 40 43 40C41 40 40 30 39 17L48 17L48 11L45 11L48 9C47 7 45 4 43 2L39 4C41 6 43 9 44 11L39 11C39 8 39 5 39 2Z","车":"M8 29C9 29 11 28 14 28L25 28L25 34L2 34L2 40L25 40L25 48L31 48L31 40L48 40L48 34L31 34L31 28L43 28L43 23L31 23L31 16L25 16L25 23L14 23C16 20 18 17 20 14L47 14L47 9L23 9C24 7 24 5 25 3L18 1C18 4 16 6 15 9L3 9L3 14L13 14C11 17 10 18 10 19C8 21 7 23 6 23C7 25 8 28 8 29Z","退":"M3 6C5 9 9 12 10 15L15 11C13 9 10 5 7 3ZM38 15L38 18L25 18L25 15ZM38 11L25 11L25 8L38 8ZM19 40C21 39 22 39 33 36C33 35 32 33 33 31L25 33L25 23L42 23C40 24 38 26 37 27C35 26 33 24 32 23L28 26C33 30 39 36 42 40L47 36C45 34 43 32 40 30C43 29 45 27 47 26L44 23L44 3L19 3L19 31C19 33 18 35 17 35C18 36 19 39 19 40ZM14 19L2 19L2 25L8 25L8 38C6 39 3 41 1 43L5 48C7 45 10 42 12 42C13 42 14 44 17 45C20 47 25 48 31 48C36 48 44 47 47 47C47 45 48 43 49 41C44 42 36 42 31 42C26 42 21 42 18 40C16 39 15 39 14 38Z"};
(function(){
 document.querySelectorAll('.m').forEach(function(e){
  var t=e.textContent,h='';
  for(var i=0;i<t.length;i++){var c=t[i];
   if(c=='\uFFE5'||c=='\u00A5')h+='<i class="yn">\u00A5</i>';
   else if(c==' ')h+='<i class="ch">&nbsp;</i>';

   else if(/[A-Z]/.test(c))h+='<i class="ch lt up">'+c+'</i>';
   else if(/[a-z]/.test(c))h+='<i class="ch lt">'+c+'</i>';
   else h+='<i class="ch">'+c.replace(/&/g,'&amp;').replace(/</g,'&lt;')+'</i>';}
  e.innerHTML=h;
 });
 function isC(c){var k=c.charCodeAt(0);return (k>=0x3000&&k<0xA000)||(k>=0xFF00&&k<0xFFEF);}
 var walker=document.createTreeWalker(document.body,NodeFilter.SHOW_TEXT,null,false);
 var nodes=[];while(walker.nextNode())nodes.push(walker.currentNode);
 nodes.forEach(function(n){
  var p=n.parentNode; if(!p||p.nodeName=='SCRIPT'||p.nodeName=='STYLE'||p.nodeName=='TITLE')return;
  var t=n.nodeValue; if(!/[\u3000-\u9fff\uff00-\uffef]/.test(t))return;
  var cs=getComputedStyle(p);var bold=parseInt(cs.fontWeight)>=600;var ls=parseFloat(cs.letterSpacing)||0;var ms=ls?' style="margin-right:'+ls+'px"':'';
  var h='',buf='';
  function flush(){if(buf){h+=buf.replace(/&/g,'&amp;').replace(/</g,'&lt;');buf='';}}
  for(var i=0;i<t.length;i++){var c=t[i];
   var d=(bold&&GB[c])||GM[c];
   if(isC(c)&&d){flush();h+='<svg class="g'+(bold&&!GB[c]?' fb':'')+'"'+ms+' viewBox="0 0 50 50"><path d="'+d+'"/></svg>';}
   else buf+=c;}
  flush();
  var s=document.createElement('span');s.innerHTML=h;
  while(s.firstChild)p.insertBefore(s.firstChild,n);
  p.removeChild(n);
 });
})();

</script>
</body></html>
